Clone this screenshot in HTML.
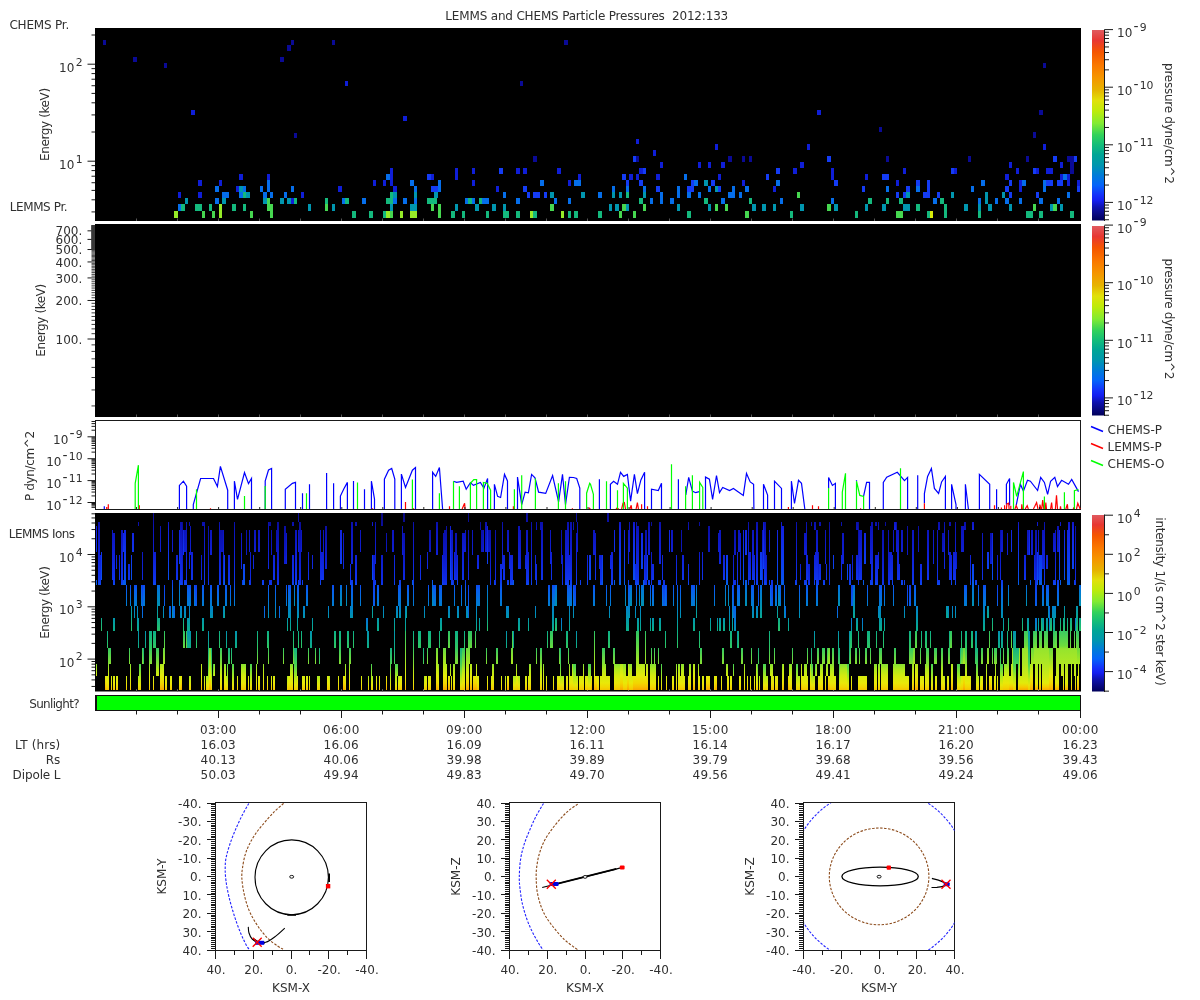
<!DOCTYPE html>
<html lang="en"><head><meta charset="utf-8"><title>LEMMS and CHEMS Particle Pressures 2012:133</title>
<style>html,body{margin:0;padding:0;background:#fff;overflow:hidden}svg{display:block;will-change:transform}text{font-family:"DejaVu Sans","Liberation Sans",sans-serif;fill:#303030}</style></head><body>
<svg width="1200" height="1000" viewBox="0 0 1200 1000">
<defs><linearGradient id="cb" x1="0" y1="1" x2="0" y2="0">
<stop offset="0.000" stop-color="#00005a"/>
<stop offset="0.030" stop-color="#08087d"/>
<stop offset="0.070" stop-color="#0e12af"/>
<stop offset="0.105" stop-color="#141ef0"/>
<stop offset="0.135" stop-color="#1432fa"/>
<stop offset="0.185" stop-color="#0564fa"/>
<stop offset="0.240" stop-color="#007dd7"/>
<stop offset="0.290" stop-color="#0096af"/>
<stop offset="0.345" stop-color="#00a596"/>
<stop offset="0.400" stop-color="#14be78"/>
<stop offset="0.450" stop-color="#32d25a"/>
<stop offset="0.510" stop-color="#82eb32"/>
<stop offset="0.575" stop-color="#beeb0a"/>
<stop offset="0.630" stop-color="#e1e10a"/>
<stop offset="0.685" stop-color="#e6b400"/>
<stop offset="0.750" stop-color="#f59600"/>
<stop offset="0.815" stop-color="#fa7800"/>
<stop offset="0.885" stop-color="#f55500"/>
<stop offset="0.945" stop-color="#e83732"/>
<stop offset="1.000" stop-color="#e05a5f"/>
</linearGradient></defs>
<rect x="0.00" y="0.00" width="1200.00" height="1000.00" fill="#fff" />
<text x="586.8" y="19.5" text-anchor="middle" font-size="12" textLength="282.9" lengthAdjust="spacing" xml:space="preserve">LEMMS and CHEMS Particle Pressures  2012:133</text>
<rect x="95.00" y="28.00" width="986.00" height="193.00" fill="#000" />
<line x1="136.50" y1="218.50" x2="136.50" y2="221.00" stroke="#555" stroke-width="1" />
<line x1="177.50" y1="218.50" x2="177.50" y2="221.00" stroke="#555" stroke-width="1" />
<line x1="218.50" y1="218.50" x2="218.50" y2="221.00" stroke="#555" stroke-width="1" />
<line x1="259.50" y1="218.50" x2="259.50" y2="221.00" stroke="#555" stroke-width="1" />
<line x1="300.50" y1="218.50" x2="300.50" y2="221.00" stroke="#555" stroke-width="1" />
<line x1="341.50" y1="218.50" x2="341.50" y2="221.00" stroke="#555" stroke-width="1" />
<line x1="382.50" y1="218.50" x2="382.50" y2="221.00" stroke="#555" stroke-width="1" />
<line x1="423.50" y1="218.50" x2="423.50" y2="221.00" stroke="#555" stroke-width="1" />
<line x1="464.50" y1="218.50" x2="464.50" y2="221.00" stroke="#555" stroke-width="1" />
<line x1="505.50" y1="218.50" x2="505.50" y2="221.00" stroke="#555" stroke-width="1" />
<line x1="546.50" y1="218.50" x2="546.50" y2="221.00" stroke="#555" stroke-width="1" />
<line x1="587.50" y1="218.50" x2="587.50" y2="221.00" stroke="#555" stroke-width="1" />
<line x1="628.50" y1="218.50" x2="628.50" y2="221.00" stroke="#555" stroke-width="1" />
<line x1="669.50" y1="218.50" x2="669.50" y2="221.00" stroke="#555" stroke-width="1" />
<line x1="710.50" y1="218.50" x2="710.50" y2="221.00" stroke="#555" stroke-width="1" />
<line x1="751.50" y1="218.50" x2="751.50" y2="221.00" stroke="#555" stroke-width="1" />
<line x1="792.50" y1="218.50" x2="792.50" y2="221.00" stroke="#555" stroke-width="1" />
<line x1="833.50" y1="218.50" x2="833.50" y2="221.00" stroke="#555" stroke-width="1" />
<line x1="874.50" y1="218.50" x2="874.50" y2="221.00" stroke="#555" stroke-width="1" />
<line x1="915.50" y1="218.50" x2="915.50" y2="221.00" stroke="#555" stroke-width="1" />
<line x1="956.50" y1="218.50" x2="956.50" y2="221.00" stroke="#555" stroke-width="1" />
<line x1="997.50" y1="218.50" x2="997.50" y2="221.00" stroke="#555" stroke-width="1" />
<line x1="1038.50" y1="218.50" x2="1038.50" y2="221.00" stroke="#555" stroke-width="1" />
<line x1="91.50" y1="211.92" x2="95.00" y2="211.92" stroke="#1a1a1a" stroke-width="1" />
<line x1="91.50" y1="199.80" x2="95.00" y2="199.80" stroke="#1a1a1a" stroke-width="1" />
<line x1="91.50" y1="190.40" x2="95.00" y2="190.40" stroke="#1a1a1a" stroke-width="1" />
<line x1="91.50" y1="182.72" x2="95.00" y2="182.72" stroke="#1a1a1a" stroke-width="1" />
<line x1="91.50" y1="176.23" x2="95.00" y2="176.23" stroke="#1a1a1a" stroke-width="1" />
<line x1="91.50" y1="170.60" x2="95.00" y2="170.60" stroke="#1a1a1a" stroke-width="1" />
<line x1="91.50" y1="165.64" x2="95.00" y2="165.64" stroke="#1a1a1a" stroke-width="1" />
<line x1="87.50" y1="161.20" x2="95.00" y2="161.20" stroke="#1a1a1a" stroke-width="1" />
<line x1="91.50" y1="132.00" x2="95.00" y2="132.00" stroke="#1a1a1a" stroke-width="1" />
<line x1="91.50" y1="114.92" x2="95.00" y2="114.92" stroke="#1a1a1a" stroke-width="1" />
<line x1="91.50" y1="102.80" x2="95.00" y2="102.80" stroke="#1a1a1a" stroke-width="1" />
<line x1="91.50" y1="93.40" x2="95.00" y2="93.40" stroke="#1a1a1a" stroke-width="1" />
<line x1="91.50" y1="85.72" x2="95.00" y2="85.72" stroke="#1a1a1a" stroke-width="1" />
<line x1="91.50" y1="79.23" x2="95.00" y2="79.23" stroke="#1a1a1a" stroke-width="1" />
<line x1="91.50" y1="73.60" x2="95.00" y2="73.60" stroke="#1a1a1a" stroke-width="1" />
<line x1="91.50" y1="68.64" x2="95.00" y2="68.64" stroke="#1a1a1a" stroke-width="1" />
<line x1="87.50" y1="64.20" x2="95.00" y2="64.20" stroke="#1a1a1a" stroke-width="1" />
<line x1="91.50" y1="35.00" x2="95.00" y2="35.00" stroke="#1a1a1a" stroke-width="1" />
<text x="82.6" y="71.6" text-anchor="end" font-size="12">10<tspan dy="-6.1" dx="1.4" font-size="10.8">2</tspan></text>
<text x="82.6" y="168.6" text-anchor="end" font-size="12">10<tspan dy="-6.1" dx="1.4" font-size="10.8">1</tspan></text>
<g shape-rendering="crispEdges">
<rect x="174.0" y="210.5" width="4.1" height="7.6" fill="#96eb28"/>
<rect x="178.1" y="204.4" width="3.1" height="6.1" fill="#056eeb"/>
<rect x="181.2" y="204.4" width="3.8" height="6.1" fill="#14b97d"/>
<rect x="178.1" y="192.3" width="3.1" height="6.1" fill="#0f1ed7"/>
<rect x="185.0" y="198.4" width="3.1" height="6.0" fill="#0096af"/>
<rect x="195.0" y="204.4" width="6.9" height="6.1" fill="#14b97d"/>
<rect x="201.9" y="210.5" width="3.1" height="7.6" fill="#46d750"/>
<rect x="198.1" y="192.3" width="3.8" height="6.1" fill="#0f1ed7"/>
<rect x="198.1" y="180.2" width="3.8" height="6.1" fill="#0f1ed7"/>
<rect x="209.1" y="204.4" width="2.8" height="6.1" fill="#14b97d"/>
<rect x="211.9" y="210.5" width="3.1" height="7.6" fill="#46d750"/>
<rect x="215.0" y="198.4" width="3.8" height="6.0" fill="#056eeb"/>
<rect x="215.0" y="186.3" width="3.8" height="6.0" fill="#056eeb"/>
<rect x="218.8" y="180.2" width="3.4" height="6.1" fill="#0f1ed7"/>
<rect x="218.8" y="210.5" width="3.4" height="7.6" fill="#96eb28"/>
<rect x="218.8" y="204.4" width="3.4" height="6.1" fill="#96eb28"/>
<rect x="222.1" y="198.4" width="3.5" height="6.0" fill="#0096af"/>
<rect x="222.1" y="192.3" width="6.6" height="6.1" fill="#056eeb"/>
<rect x="232.2" y="204.4" width="3.4" height="6.1" fill="#14b97d"/>
<rect x="236.2" y="186.3" width="2.8" height="6.0" fill="#0f1ed7"/>
<rect x="239.0" y="174.2" width="3.8" height="6.1" fill="#0f1ed7"/>
<rect x="239.0" y="186.3" width="3.8" height="6.0" fill="#0096af"/>
<rect x="239.0" y="192.3" width="3.8" height="6.1" fill="#056eeb"/>
<rect x="242.8" y="186.3" width="3.5" height="6.0" fill="#056eeb"/>
<rect x="242.8" y="192.3" width="3.5" height="6.1" fill="#14b97d"/>
<rect x="246.2" y="192.3" width="3.5" height="6.1" fill="#0096af"/>
<rect x="243.1" y="204.4" width="2.9" height="6.1" fill="#14b97d"/>
<rect x="250.0" y="210.5" width="3.1" height="7.6" fill="#46d750"/>
<rect x="260.0" y="186.3" width="3.1" height="6.0" fill="#056eeb"/>
<rect x="263.1" y="192.3" width="3.8" height="6.1" fill="#056eeb"/>
<rect x="263.1" y="198.4" width="3.8" height="6.0" fill="#0096af"/>
<rect x="266.9" y="174.2" width="3.1" height="6.1" fill="#0f1ed7"/>
<rect x="266.9" y="180.2" width="3.1" height="6.1" fill="#056eeb"/>
<rect x="266.9" y="186.3" width="3.1" height="6.0" fill="#056eeb"/>
<rect x="266.9" y="198.4" width="3.1" height="6.0" fill="#46d750"/>
<rect x="266.9" y="204.4" width="3.1" height="6.1" fill="#46d750"/>
<rect x="270.0" y="192.3" width="3.1" height="6.1" fill="#056eeb"/>
<rect x="270.0" y="204.4" width="3.1" height="6.1" fill="#46d750"/>
<rect x="270.0" y="210.5" width="3.1" height="7.6" fill="#46d750"/>
<rect x="280.0" y="198.4" width="3.8" height="6.0" fill="#0096af"/>
<rect x="283.8" y="192.3" width="3.1" height="6.1" fill="#056eeb"/>
<rect x="286.9" y="198.4" width="3.8" height="6.0" fill="#0096af"/>
<rect x="290.6" y="198.4" width="3.1" height="6.0" fill="#0f1ed7"/>
<rect x="293.8" y="198.4" width="3.1" height="6.0" fill="#14b97d"/>
<rect x="291.0" y="186.3" width="3.0" height="6.0" fill="#056eeb"/>
<rect x="301.0" y="192.3" width="3.0" height="6.1" fill="#0f1ed7"/>
<rect x="308.1" y="204.4" width="1.9" height="6.1" fill="#0096af"/>
<rect x="310.0" y="204.4" width="1.0" height="6.1" fill="#0096af"/>
<rect x="325.0" y="204.4" width="3.1" height="6.1" fill="#46d750"/>
<rect x="325.0" y="198.4" width="3.1" height="6.0" fill="#14b97d"/>
<rect x="332.2" y="204.4" width="2.8" height="6.1" fill="#0096af"/>
<rect x="338.1" y="186.3" width="3.8" height="6.0" fill="#0f1ed7"/>
<rect x="342.2" y="198.4" width="3.0" height="6.0" fill="#056eeb"/>
<rect x="345.2" y="198.4" width="3.8" height="6.0" fill="#14b97d"/>
<rect x="352.1" y="210.5" width="3.8" height="7.6" fill="#14b97d"/>
<rect x="362.2" y="198.4" width="3.6" height="6.0" fill="#056eeb"/>
<rect x="369.0" y="210.5" width="3.9" height="7.6" fill="#14b97d"/>
<rect x="373.1" y="180.2" width="2.9" height="6.1" fill="#0f1ed7"/>
<rect x="383.1" y="210.5" width="3.1" height="7.6" fill="#14b97d"/>
<rect x="386.2" y="210.5" width="3.8" height="7.6" fill="#96eb28"/>
<rect x="390.0" y="210.5" width="2.8" height="7.6" fill="#46d750"/>
<rect x="383.1" y="180.2" width="2.9" height="6.1" fill="#0f1ed7"/>
<rect x="386.2" y="174.2" width="3.8" height="6.1" fill="#056eeb"/>
<rect x="390.0" y="168.2" width="2.8" height="6.0" fill="#0f1ed7"/>
<rect x="390.0" y="174.2" width="2.8" height="6.1" fill="#0f1ed7"/>
<rect x="390.0" y="180.2" width="2.8" height="6.1" fill="#0f1ed7"/>
<rect x="386.2" y="198.4" width="3.8" height="6.0" fill="#14b97d"/>
<rect x="390.0" y="198.4" width="3.1" height="6.0" fill="#14b97d"/>
<rect x="393.1" y="198.4" width="3.8" height="6.0" fill="#056eeb"/>
<rect x="390.0" y="192.3" width="3.1" height="6.1" fill="#14b97d"/>
<rect x="393.1" y="192.3" width="3.8" height="6.1" fill="#0096af"/>
<rect x="393.1" y="186.3" width="3.8" height="6.0" fill="#0f1ed7"/>
<rect x="390.0" y="204.4" width="2.8" height="6.1" fill="#0096af"/>
<rect x="400.0" y="210.5" width="3.1" height="7.6" fill="#96eb28"/>
<rect x="403.1" y="198.4" width="3.8" height="6.0" fill="#056eeb"/>
<rect x="410.0" y="180.2" width="3.8" height="6.1" fill="#056eeb"/>
<rect x="413.8" y="186.3" width="3.1" height="6.0" fill="#056eeb"/>
<rect x="413.8" y="192.3" width="3.1" height="6.1" fill="#0096af"/>
<rect x="413.8" y="198.4" width="3.1" height="6.0" fill="#056eeb"/>
<rect x="410.0" y="204.4" width="6.9" height="6.1" fill="#0096af"/>
<rect x="410.0" y="210.5" width="6.9" height="7.6" fill="#96eb28"/>
<rect x="427.2" y="174.2" width="3.8" height="6.1" fill="#143cf5"/>
<rect x="431.0" y="174.2" width="2.8" height="6.1" fill="#0f1ed7"/>
<rect x="431.0" y="186.3" width="6.5" height="6.0" fill="#143cf5"/>
<rect x="437.5" y="180.2" width="3.1" height="6.1" fill="#056eeb"/>
<rect x="437.5" y="186.3" width="3.1" height="6.0" fill="#056eeb"/>
<rect x="434.4" y="192.3" width="3.1" height="6.1" fill="#0096af"/>
<rect x="427.2" y="198.4" width="10.2" height="6.0" fill="#14b97d"/>
<rect x="431.0" y="204.4" width="2.8" height="6.1" fill="#46d750"/>
<rect x="438.1" y="204.4" width="2.8" height="6.1" fill="#46d750"/>
<rect x="438.1" y="210.5" width="2.8" height="7.6" fill="#46d750"/>
<rect x="451.2" y="210.5" width="3.8" height="7.6" fill="#14b97d"/>
<rect x="455.0" y="204.4" width="3.1" height="6.1" fill="#0096af"/>
<rect x="455.0" y="168.2" width="3.1" height="6.0" fill="#0f1ed7"/>
<rect x="455.0" y="174.2" width="3.1" height="6.1" fill="#0f1ed7"/>
<rect x="461.9" y="210.5" width="3.1" height="7.6" fill="#14b97d"/>
<rect x="465.0" y="198.4" width="3.1" height="6.0" fill="#056eeb"/>
<rect x="468.1" y="198.4" width="3.8" height="6.0" fill="#14b97d"/>
<rect x="471.9" y="198.4" width="3.1" height="6.0" fill="#056eeb"/>
<rect x="471.9" y="180.2" width="3.1" height="6.1" fill="#0f1ed7"/>
<rect x="471.9" y="168.2" width="3.1" height="6.0" fill="#0f1ed7"/>
<rect x="475.0" y="204.4" width="3.8" height="6.1" fill="#0096af"/>
<rect x="479.0" y="198.4" width="2.9" height="6.0" fill="#14b97d"/>
<rect x="481.9" y="198.4" width="7.1" height="6.0" fill="#056eeb"/>
<rect x="486.0" y="210.5" width="3.0" height="7.6" fill="#14b97d"/>
<rect x="492.2" y="204.4" width="3.8" height="6.1" fill="#0096af"/>
<rect x="496.0" y="186.3" width="3.0" height="6.0" fill="#0f1ed7"/>
<rect x="499.0" y="168.2" width="3.9" height="6.0" fill="#143cf5"/>
<rect x="503.1" y="192.3" width="2.9" height="6.1" fill="#056eeb"/>
<rect x="503.1" y="204.4" width="2.9" height="6.1" fill="#0096af"/>
<rect x="503.1" y="210.5" width="5.9" height="7.6" fill="#14b97d"/>
<rect x="515.9" y="168.2" width="4.1" height="6.0" fill="#0f1ed7"/>
<rect x="515.9" y="198.4" width="4.1" height="6.0" fill="#056eeb"/>
<rect x="515.9" y="210.5" width="4.1" height="7.6" fill="#14b97d"/>
<rect x="523.1" y="168.2" width="3.8" height="6.0" fill="#0f1ed7"/>
<rect x="523.1" y="186.3" width="3.8" height="6.0" fill="#143cf5"/>
<rect x="526.9" y="192.3" width="3.1" height="6.1" fill="#143cf5"/>
<rect x="530.0" y="210.5" width="3.1" height="7.6" fill="#96eb28"/>
<rect x="533.1" y="210.5" width="3.8" height="7.6" fill="#14b97d"/>
<rect x="533.1" y="192.3" width="6.9" height="6.1" fill="#143cf5"/>
<rect x="533.1" y="156.1" width="3.8" height="6.0" fill="#0a0a96"/>
<rect x="540.0" y="180.2" width="4.0" height="6.1" fill="#056eeb"/>
<rect x="544.0" y="192.3" width="2.9" height="6.1" fill="#143cf5"/>
<rect x="550.0" y="192.3" width="3.8" height="6.1" fill="#0096af"/>
<rect x="553.8" y="198.4" width="3.1" height="6.0" fill="#056eeb"/>
<rect x="550.0" y="204.4" width="3.8" height="6.1" fill="#46d750"/>
<rect x="557.2" y="168.2" width="3.8" height="6.0" fill="#0f1ed7"/>
<rect x="561.0" y="210.5" width="3.0" height="7.6" fill="#96eb28"/>
<rect x="568.1" y="180.2" width="2.9" height="6.1" fill="#0f1ed7"/>
<rect x="568.1" y="198.4" width="2.9" height="6.0" fill="#056eeb"/>
<rect x="568.1" y="210.5" width="2.9" height="7.6" fill="#14b97d"/>
<rect x="574.0" y="180.2" width="7.0" height="6.1" fill="#056eeb"/>
<rect x="578.1" y="174.2" width="2.9" height="6.1" fill="#0f1ed7"/>
<rect x="574.0" y="210.5" width="3.9" height="7.6" fill="#14b97d"/>
<rect x="581.0" y="192.3" width="4.0" height="6.1" fill="#0096af"/>
<rect x="598.1" y="192.3" width="3.8" height="6.1" fill="#056eeb"/>
<rect x="598.1" y="210.5" width="3.8" height="7.6" fill="#14b97d"/>
<rect x="608.8" y="204.4" width="1.2" height="6.1" fill="#0096af"/>
<rect x="610.0" y="204.4" width="1.9" height="6.1" fill="#0096af"/>
<rect x="611.9" y="186.3" width="3.1" height="6.0" fill="#056eeb"/>
<rect x="611.9" y="192.3" width="3.1" height="6.1" fill="#0096af"/>
<rect x="615.0" y="204.4" width="4.0" height="6.1" fill="#0096af"/>
<rect x="619.0" y="192.3" width="3.1" height="6.1" fill="#0096af"/>
<rect x="619.0" y="210.5" width="3.1" height="7.6" fill="#46d750"/>
<rect x="622.1" y="174.2" width="3.5" height="6.1" fill="#143cf5"/>
<rect x="622.1" y="204.4" width="3.5" height="6.1" fill="#46d750"/>
<rect x="625.6" y="204.4" width="3.1" height="6.1" fill="#0096af"/>
<rect x="626.0" y="180.2" width="3.0" height="6.1" fill="#143cf5"/>
<rect x="626.0" y="186.3" width="3.0" height="6.0" fill="#056eeb"/>
<rect x="626.0" y="192.3" width="3.0" height="6.1" fill="#14b97d"/>
<rect x="629.0" y="174.2" width="4.1" height="6.1" fill="#0f1ed7"/>
<rect x="633.1" y="156.1" width="3.1" height="6.0" fill="#143cf5"/>
<rect x="636.2" y="156.1" width="2.8" height="6.0" fill="#0a0a96"/>
<rect x="633.1" y="210.5" width="3.1" height="7.6" fill="#46d750"/>
<rect x="636.0" y="174.2" width="3.0" height="6.1" fill="#0f1ed7"/>
<rect x="639.0" y="168.2" width="3.8" height="6.0" fill="#0f1ed7"/>
<rect x="642.8" y="168.2" width="3.2" height="6.0" fill="#143cf5"/>
<rect x="639.0" y="180.2" width="3.8" height="6.1" fill="#143cf5"/>
<rect x="639.0" y="198.4" width="3.8" height="6.0" fill="#14b97d"/>
<rect x="642.8" y="186.3" width="3.2" height="6.0" fill="#056eeb"/>
<rect x="642.8" y="192.3" width="3.2" height="6.1" fill="#0096af"/>
<rect x="642.8" y="204.4" width="3.2" height="6.1" fill="#46d750"/>
<rect x="650.0" y="198.4" width="3.1" height="6.0" fill="#056eeb"/>
<rect x="653.1" y="150.0" width="2.9" height="6.1" fill="#0f1ed7"/>
<rect x="656.0" y="174.2" width="4.0" height="6.1" fill="#0f1ed7"/>
<rect x="656.0" y="186.3" width="4.0" height="6.0" fill="#143cf5"/>
<rect x="660.0" y="162.1" width="3.1" height="6.1" fill="#0f1ed7"/>
<rect x="660.0" y="192.3" width="3.1" height="6.1" fill="#056eeb"/>
<rect x="660.0" y="198.4" width="3.1" height="6.0" fill="#056eeb"/>
<rect x="670.0" y="198.4" width="4.0" height="6.0" fill="#056eeb"/>
<rect x="677.1" y="186.3" width="2.9" height="6.0" fill="#056eeb"/>
<rect x="677.1" y="192.3" width="2.9" height="6.1" fill="#056eeb"/>
<rect x="677.1" y="204.4" width="2.9" height="6.1" fill="#0096af"/>
<rect x="684.0" y="174.2" width="3.1" height="6.1" fill="#056eeb"/>
<rect x="687.1" y="186.3" width="3.9" height="6.0" fill="#143cf5"/>
<rect x="687.1" y="192.3" width="3.9" height="6.1" fill="#056eeb"/>
<rect x="691.0" y="180.2" width="3.0" height="6.1" fill="#143cf5"/>
<rect x="691.0" y="186.3" width="3.0" height="6.0" fill="#143cf5"/>
<rect x="694.0" y="180.2" width="4.1" height="6.1" fill="#056eeb"/>
<rect x="687.1" y="210.5" width="3.9" height="7.6" fill="#14b97d"/>
<rect x="698.1" y="162.1" width="3.1" height="6.1" fill="#0f1ed7"/>
<rect x="698.1" y="192.3" width="3.1" height="6.1" fill="#056eeb"/>
<rect x="704.0" y="180.2" width="3.9" height="6.1" fill="#0096af"/>
<rect x="704.0" y="198.4" width="3.9" height="6.0" fill="#14b97d"/>
<rect x="707.9" y="162.1" width="3.1" height="6.1" fill="#0f1ed7"/>
<rect x="707.9" y="186.3" width="3.1" height="6.0" fill="#056eeb"/>
<rect x="707.9" y="204.4" width="3.1" height="6.1" fill="#0096af"/>
<rect x="711.0" y="180.2" width="4.0" height="6.1" fill="#143cf5"/>
<rect x="715.0" y="143.9" width="3.1" height="6.1" fill="#0f1ed7"/>
<rect x="715.0" y="186.3" width="3.1" height="6.0" fill="#0096af"/>
<rect x="715.0" y="204.4" width="3.1" height="6.1" fill="#46d750"/>
<rect x="718.1" y="174.2" width="2.9" height="6.1" fill="#0f1ed7"/>
<rect x="718.1" y="186.3" width="2.9" height="6.0" fill="#143cf5"/>
<rect x="721.0" y="162.1" width="4.0" height="6.1" fill="#0f1ed7"/>
<rect x="721.0" y="198.4" width="4.0" height="6.0" fill="#056eeb"/>
<rect x="725.0" y="204.4" width="3.1" height="6.1" fill="#46d750"/>
<rect x="728.1" y="156.1" width="3.8" height="6.0" fill="#0a0a96"/>
<rect x="728.1" y="192.3" width="6.9" height="6.1" fill="#056eeb"/>
<rect x="731.9" y="186.3" width="3.1" height="6.0" fill="#056eeb"/>
<rect x="739.0" y="192.3" width="3.1" height="6.1" fill="#056eeb"/>
<rect x="742.1" y="156.1" width="2.9" height="6.0" fill="#0a0a96"/>
<rect x="742.1" y="180.2" width="2.9" height="6.1" fill="#0f1ed7"/>
<rect x="745.0" y="186.3" width="4.0" height="6.0" fill="#056eeb"/>
<rect x="745.0" y="210.5" width="4.0" height="7.6" fill="#46d750"/>
<rect x="749.0" y="156.1" width="3.1" height="6.0" fill="#0a0a96"/>
<rect x="749.0" y="198.4" width="3.1" height="6.0" fill="#14b97d"/>
<rect x="752.1" y="204.4" width="3.9" height="6.1" fill="#0096af"/>
<rect x="761.9" y="204.4" width="4.0" height="6.1" fill="#0096af"/>
<rect x="765.9" y="174.2" width="3.1" height="6.1" fill="#143cf5"/>
<rect x="773.1" y="204.4" width="2.9" height="6.1" fill="#0096af"/>
<rect x="773.1" y="186.3" width="2.9" height="6.0" fill="#0f1ed7"/>
<rect x="776.0" y="168.2" width="4.0" height="6.0" fill="#143cf5"/>
<rect x="776.0" y="180.2" width="4.0" height="6.1" fill="#056eeb"/>
<rect x="780.0" y="198.4" width="3.1" height="6.0" fill="#056eeb"/>
<rect x="790.0" y="210.5" width="3.1" height="7.6" fill="#14b97d"/>
<rect x="793.1" y="168.2" width="4.0" height="6.0" fill="#0f1ed7"/>
<rect x="797.1" y="192.3" width="2.9" height="6.1" fill="#46d750"/>
<rect x="800.0" y="162.1" width="4.0" height="6.1" fill="#0f1ed7"/>
<rect x="800.0" y="204.4" width="4.0" height="6.1" fill="#0096af"/>
<rect x="806.9" y="143.9" width="3.1" height="6.1" fill="#0f1ed7"/>
<rect x="827.1" y="156.1" width="3.9" height="6.0" fill="#143cf5"/>
<rect x="827.1" y="204.4" width="3.9" height="6.1" fill="#46d750"/>
<rect x="831.0" y="168.2" width="3.0" height="6.0" fill="#0f1ed7"/>
<rect x="831.0" y="174.2" width="3.0" height="6.1" fill="#0f1ed7"/>
<rect x="831.0" y="198.4" width="3.0" height="6.0" fill="#056eeb"/>
<rect x="834.0" y="180.2" width="4.1" height="6.1" fill="#143cf5"/>
<rect x="834.0" y="204.4" width="4.1" height="6.1" fill="#0096af"/>
<rect x="855.0" y="210.5" width="3.1" height="7.6" fill="#14b97d"/>
<rect x="862.1" y="186.3" width="2.9" height="6.0" fill="#143cf5"/>
<rect x="865.0" y="174.2" width="3.1" height="6.1" fill="#0f1ed7"/>
<rect x="865.0" y="204.4" width="3.1" height="6.1" fill="#0096af"/>
<rect x="868.1" y="198.4" width="3.8" height="6.0" fill="#14b97d"/>
<rect x="882.2" y="174.2" width="6.8" height="6.1" fill="#143cf5"/>
<rect x="882.2" y="204.4" width="3.8" height="6.1" fill="#0096af"/>
<rect x="886.0" y="156.1" width="3.0" height="6.0" fill="#0a0a96"/>
<rect x="886.0" y="186.3" width="3.0" height="6.0" fill="#056eeb"/>
<rect x="886.0" y="198.4" width="3.0" height="6.0" fill="#14b97d"/>
<rect x="896.0" y="180.2" width="3.0" height="6.1" fill="#0f1ed7"/>
<rect x="896.0" y="192.3" width="3.0" height="6.1" fill="#143cf5"/>
<rect x="896.0" y="210.5" width="6.9" height="7.6" fill="#46d750"/>
<rect x="899.0" y="198.4" width="3.9" height="6.0" fill="#14b97d"/>
<rect x="902.9" y="168.2" width="3.1" height="6.0" fill="#0f1ed7"/>
<rect x="902.9" y="192.3" width="3.1" height="6.1" fill="#143cf5"/>
<rect x="906.0" y="192.3" width="4.0" height="6.1" fill="#0096af"/>
<rect x="906.0" y="186.3" width="4.0" height="6.0" fill="#143cf5"/>
<rect x="902.9" y="204.4" width="7.1" height="6.1" fill="#0096af"/>
<rect x="915.8" y="180.2" width="4.1" height="6.1" fill="#143cf5"/>
<rect x="915.8" y="186.3" width="4.1" height="6.0" fill="#056eeb"/>
<rect x="915.8" y="204.4" width="4.1" height="6.1" fill="#14b97d"/>
<rect x="923.4" y="192.3" width="6.6" height="6.1" fill="#143cf5"/>
<rect x="927.1" y="180.2" width="2.9" height="6.1" fill="#143cf5"/>
<rect x="927.1" y="186.3" width="2.9" height="6.0" fill="#143cf5"/>
<rect x="927.1" y="210.5" width="2.9" height="7.6" fill="#14b97d"/>
<rect x="930.0" y="210.5" width="3.1" height="7.6" fill="#d7eb0a"/>
<rect x="933.3" y="198.4" width="3.6" height="6.0" fill="#056eeb"/>
<rect x="937.0" y="192.3" width="3.2" height="6.1" fill="#143cf5"/>
<rect x="940.2" y="198.4" width="3.6" height="6.0" fill="#14b97d"/>
<rect x="943.8" y="204.4" width="3.4" height="6.1" fill="#14b97d"/>
<rect x="943.8" y="210.5" width="3.4" height="7.6" fill="#14b97d"/>
<rect x="951.1" y="168.2" width="2.9" height="6.0" fill="#143cf5"/>
<rect x="954.0" y="168.2" width="2.9" height="6.0" fill="#0f1ed7"/>
<rect x="951.1" y="192.3" width="2.9" height="6.1" fill="#0096af"/>
<rect x="964.2" y="204.4" width="3.8" height="6.1" fill="#0096af"/>
<rect x="968.0" y="156.1" width="2.9" height="6.0" fill="#0a0a96"/>
<rect x="971.2" y="186.3" width="2.9" height="6.0" fill="#056eeb"/>
<rect x="978.1" y="198.4" width="2.9" height="6.0" fill="#056eeb"/>
<rect x="978.1" y="204.4" width="2.9" height="6.1" fill="#0096af"/>
<rect x="978.1" y="210.5" width="2.9" height="7.6" fill="#14b97d"/>
<rect x="981.0" y="180.2" width="4.1" height="6.1" fill="#056eeb"/>
<rect x="985.1" y="192.3" width="3.2" height="6.1" fill="#0096af"/>
<rect x="985.1" y="198.4" width="3.2" height="6.0" fill="#0096af"/>
<rect x="988.3" y="204.4" width="3.6" height="6.1" fill="#0096af"/>
<rect x="995.0" y="198.4" width="2.9" height="6.0" fill="#056eeb"/>
<rect x="1002.2" y="192.3" width="2.9" height="6.1" fill="#0096af"/>
<rect x="1005.1" y="174.2" width="4.1" height="6.1" fill="#0f1ed7"/>
<rect x="1005.1" y="186.3" width="4.1" height="6.0" fill="#143cf5"/>
<rect x="1005.1" y="198.4" width="4.1" height="6.0" fill="#056eeb"/>
<rect x="1009.2" y="162.1" width="2.9" height="6.1" fill="#0f1ed7"/>
<rect x="1009.2" y="180.2" width="2.9" height="6.1" fill="#143cf5"/>
<rect x="1009.2" y="192.3" width="2.9" height="6.1" fill="#143cf5"/>
<rect x="1009.2" y="204.4" width="2.9" height="6.1" fill="#0096af"/>
<rect x="1016.0" y="168.2" width="3.1" height="6.0" fill="#0f1ed7"/>
<rect x="1019.1" y="180.2" width="2.9" height="6.1" fill="#0f1ed7"/>
<rect x="1019.1" y="186.3" width="2.9" height="6.0" fill="#0f1ed7"/>
<rect x="1019.1" y="198.4" width="2.9" height="6.0" fill="#056eeb"/>
<rect x="1022.0" y="180.2" width="3.9" height="6.1" fill="#056eeb"/>
<rect x="1025.9" y="156.1" width="3.2" height="6.0" fill="#0a0a96"/>
<rect x="1025.9" y="210.5" width="7.0" height="7.6" fill="#14b97d"/>
<rect x="1032.9" y="168.2" width="3.2" height="6.0" fill="#143cf5"/>
<rect x="1036.1" y="168.2" width="2.9" height="6.0" fill="#0f1ed7"/>
<rect x="1032.9" y="204.4" width="3.2" height="6.1" fill="#46d750"/>
<rect x="1036.1" y="192.3" width="2.9" height="6.1" fill="#143cf5"/>
<rect x="1039.1" y="198.4" width="3.9" height="6.0" fill="#056eeb"/>
<rect x="1039.1" y="210.5" width="3.9" height="7.6" fill="#14b97d"/>
<rect x="1043.0" y="143.9" width="3.1" height="6.1" fill="#0f1ed7"/>
<rect x="1043.0" y="180.2" width="3.1" height="6.1" fill="#056eeb"/>
<rect x="1043.0" y="186.3" width="3.1" height="6.0" fill="#056eeb"/>
<rect x="1046.1" y="168.2" width="6.9" height="6.0" fill="#0f1ed7"/>
<rect x="1046.1" y="180.2" width="6.9" height="6.1" fill="#143cf5"/>
<rect x="1050.3" y="204.4" width="2.6" height="6.1" fill="#0096af"/>
<rect x="1052.9" y="204.4" width="4.1" height="6.1" fill="#46d750"/>
<rect x="1052.9" y="156.1" width="4.1" height="6.0" fill="#143cf5"/>
<rect x="1057.0" y="198.4" width="3.2" height="6.0" fill="#056eeb"/>
<rect x="1057.0" y="180.2" width="6.1" height="6.1" fill="#143cf5"/>
<rect x="1060.2" y="162.1" width="2.9" height="6.1" fill="#0f1ed7"/>
<rect x="1060.2" y="174.2" width="2.9" height="6.1" fill="#0f1ed7"/>
<rect x="1060.2" y="204.4" width="2.9" height="6.1" fill="#0096af"/>
<rect x="1063.1" y="174.2" width="4.1" height="6.1" fill="#056eeb"/>
<rect x="1067.2" y="156.1" width="2.9" height="6.0" fill="#0a0a96"/>
<rect x="1070.1" y="156.1" width="3.9" height="6.0" fill="#0a0a96"/>
<rect x="1074.1" y="156.1" width="2.9" height="6.0" fill="#143cf5"/>
<rect x="1070.1" y="162.1" width="3.9" height="6.1" fill="#0a0a96"/>
<rect x="1070.1" y="168.2" width="3.9" height="6.0" fill="#0a0a96"/>
<rect x="1067.2" y="174.2" width="2.9" height="6.1" fill="#0f1ed7"/>
<rect x="1067.2" y="180.2" width="2.9" height="6.1" fill="#0f1ed7"/>
<rect x="1067.2" y="192.3" width="2.9" height="6.1" fill="#056eeb"/>
<rect x="1070.1" y="210.5" width="3.9" height="7.6" fill="#14b97d"/>
<rect x="1077.0" y="180.2" width="2.9" height="6.1" fill="#0f1ed7"/>
<rect x="1077.0" y="186.3" width="2.9" height="6.0" fill="#143cf5"/>
<rect x="102.9" y="40.0" width="3.4" height="5.2" fill="#0a0a96"/>
<rect x="133.3" y="56.7" width="3.4" height="5.2" fill="#0a0a96"/>
<rect x="163.7" y="62.9" width="3.4" height="5.2" fill="#0a0a96"/>
<rect x="191.3" y="110.0" width="3.4" height="5.2" fill="#0f1ed7"/>
<rect x="280.3" y="56.7" width="3.4" height="5.2" fill="#0a0a96"/>
<rect x="287.1" y="45.4" width="3.4" height="5.2" fill="#0a0a96"/>
<rect x="290.8" y="40.0" width="3.4" height="5.2" fill="#0a0a96"/>
<rect x="293.7" y="132.9" width="3.4" height="5.2" fill="#0a0a96"/>
<rect x="331.6" y="40.0" width="3.4" height="5.2" fill="#0a0a96"/>
<rect x="345.0" y="80.8" width="3.4" height="5.2" fill="#0f1ed7"/>
<rect x="403.3" y="115.8" width="3.4" height="5.2" fill="#0f1ed7"/>
<rect x="519.6" y="80.8" width="3.4" height="5.2" fill="#0a0a96"/>
<rect x="564.1" y="40.0" width="3.4" height="5.2" fill="#0a0a96"/>
<rect x="635.8" y="138.7" width="3.4" height="5.2" fill="#0f1ed7"/>
<rect x="817.1" y="110.0" width="3.4" height="5.2" fill="#0f1ed7"/>
<rect x="878.7" y="126.7" width="3.4" height="5.2" fill="#0a0a96"/>
<rect x="1032.5" y="132.4" width="3.4" height="5.2" fill="#0a0a96"/>
<rect x="1039.1" y="110.0" width="3.4" height="5.2" fill="#0a0a96"/>
<rect x="1042.5" y="62.9" width="3.4" height="5.2" fill="#0a0a96"/>
</g>
<text x="9.4" y="28.6" text-anchor="start" font-size="12" textLength="59.9" lengthAdjust="spacing" >CHEMS Pr.</text>
<text x="9.7" y="210.9" text-anchor="start" font-size="12" textLength="58.0" lengthAdjust="spacing" >LEMMS Pr.</text>
<text transform="translate(49.2,124.4) rotate(-90)" text-anchor="middle" font-size="12" textLength="73.0" lengthAdjust="spacing">Energy (keV)</text>
<rect x="95.00" y="224.00" width="986.00" height="193.00" fill="#000" />
<line x1="136.50" y1="414.50" x2="136.50" y2="417.00" stroke="#555" stroke-width="1" />
<line x1="177.50" y1="414.50" x2="177.50" y2="417.00" stroke="#555" stroke-width="1" />
<line x1="218.50" y1="414.50" x2="218.50" y2="417.00" stroke="#555" stroke-width="1" />
<line x1="259.50" y1="414.50" x2="259.50" y2="417.00" stroke="#555" stroke-width="1" />
<line x1="300.50" y1="414.50" x2="300.50" y2="417.00" stroke="#555" stroke-width="1" />
<line x1="341.50" y1="414.50" x2="341.50" y2="417.00" stroke="#555" stroke-width="1" />
<line x1="382.50" y1="414.50" x2="382.50" y2="417.00" stroke="#555" stroke-width="1" />
<line x1="423.50" y1="414.50" x2="423.50" y2="417.00" stroke="#555" stroke-width="1" />
<line x1="464.50" y1="414.50" x2="464.50" y2="417.00" stroke="#555" stroke-width="1" />
<line x1="505.50" y1="414.50" x2="505.50" y2="417.00" stroke="#555" stroke-width="1" />
<line x1="546.50" y1="414.50" x2="546.50" y2="417.00" stroke="#555" stroke-width="1" />
<line x1="587.50" y1="414.50" x2="587.50" y2="417.00" stroke="#555" stroke-width="1" />
<line x1="628.50" y1="414.50" x2="628.50" y2="417.00" stroke="#555" stroke-width="1" />
<line x1="669.50" y1="414.50" x2="669.50" y2="417.00" stroke="#555" stroke-width="1" />
<line x1="710.50" y1="414.50" x2="710.50" y2="417.00" stroke="#555" stroke-width="1" />
<line x1="751.50" y1="414.50" x2="751.50" y2="417.00" stroke="#555" stroke-width="1" />
<line x1="792.50" y1="414.50" x2="792.50" y2="417.00" stroke="#555" stroke-width="1" />
<line x1="833.50" y1="414.50" x2="833.50" y2="417.00" stroke="#555" stroke-width="1" />
<line x1="874.50" y1="414.50" x2="874.50" y2="417.00" stroke="#555" stroke-width="1" />
<line x1="915.50" y1="414.50" x2="915.50" y2="417.00" stroke="#555" stroke-width="1" />
<line x1="956.50" y1="414.50" x2="956.50" y2="417.00" stroke="#555" stroke-width="1" />
<line x1="997.50" y1="414.50" x2="997.50" y2="417.00" stroke="#555" stroke-width="1" />
<line x1="1038.50" y1="414.50" x2="1038.50" y2="417.00" stroke="#555" stroke-width="1" />
<line x1="91.50" y1="405.93" x2="95.00" y2="405.93" stroke="#1a1a1a" stroke-width="1" opacity="0.85"/>
<line x1="91.50" y1="389.94" x2="95.00" y2="389.94" stroke="#1a1a1a" stroke-width="1" opacity="0.85"/>
<line x1="91.50" y1="377.53" x2="95.00" y2="377.53" stroke="#1a1a1a" stroke-width="1" opacity="0.85"/>
<line x1="91.50" y1="367.40" x2="95.00" y2="367.40" stroke="#1a1a1a" stroke-width="1" opacity="0.85"/>
<line x1="91.50" y1="358.83" x2="95.00" y2="358.83" stroke="#1a1a1a" stroke-width="1" opacity="0.85"/>
<line x1="91.50" y1="351.40" x2="95.00" y2="351.40" stroke="#1a1a1a" stroke-width="1" opacity="0.85"/>
<line x1="91.50" y1="344.86" x2="95.00" y2="344.86" stroke="#1a1a1a" stroke-width="1" opacity="0.85"/>
<line x1="87.50" y1="339.00" x2="95.00" y2="339.00" stroke="#1a1a1a" stroke-width="1" />
<line x1="91.50" y1="333.70" x2="95.00" y2="333.70" stroke="#1a1a1a" stroke-width="1" opacity="0.85"/>
<line x1="91.50" y1="328.86" x2="95.00" y2="328.86" stroke="#1a1a1a" stroke-width="1" opacity="0.85"/>
<line x1="91.50" y1="324.42" x2="95.00" y2="324.42" stroke="#1a1a1a" stroke-width="1" opacity="0.85"/>
<line x1="91.50" y1="320.30" x2="95.00" y2="320.30" stroke="#1a1a1a" stroke-width="1" opacity="0.85"/>
<line x1="91.50" y1="316.46" x2="95.00" y2="316.46" stroke="#1a1a1a" stroke-width="1" opacity="0.85"/>
<line x1="91.50" y1="312.87" x2="95.00" y2="312.87" stroke="#1a1a1a" stroke-width="1" opacity="0.85"/>
<line x1="91.50" y1="309.50" x2="95.00" y2="309.50" stroke="#1a1a1a" stroke-width="1" opacity="0.85"/>
<line x1="91.50" y1="306.33" x2="95.00" y2="306.33" stroke="#1a1a1a" stroke-width="1" opacity="0.85"/>
<line x1="91.50" y1="303.32" x2="95.00" y2="303.32" stroke="#1a1a1a" stroke-width="1" opacity="0.85"/>
<line x1="87.50" y1="300.47" x2="95.00" y2="300.47" stroke="#1a1a1a" stroke-width="1" />
<line x1="91.50" y1="297.76" x2="95.00" y2="297.76" stroke="#1a1a1a" stroke-width="1" opacity="0.85"/>
<line x1="91.50" y1="295.17" x2="95.00" y2="295.17" stroke="#1a1a1a" stroke-width="1" opacity="0.85"/>
<line x1="91.50" y1="292.70" x2="95.00" y2="292.70" stroke="#1a1a1a" stroke-width="1" opacity="0.85"/>
<line x1="91.50" y1="290.33" x2="95.00" y2="290.33" stroke="#1a1a1a" stroke-width="1" opacity="0.85"/>
<line x1="91.50" y1="288.06" x2="95.00" y2="288.06" stroke="#1a1a1a" stroke-width="1" opacity="0.85"/>
<line x1="91.50" y1="285.88" x2="95.00" y2="285.88" stroke="#1a1a1a" stroke-width="1" opacity="0.85"/>
<line x1="91.50" y1="283.79" x2="95.00" y2="283.79" stroke="#1a1a1a" stroke-width="1" opacity="0.85"/>
<line x1="91.50" y1="281.76" x2="95.00" y2="281.76" stroke="#1a1a1a" stroke-width="1" opacity="0.85"/>
<line x1="91.50" y1="279.81" x2="95.00" y2="279.81" stroke="#1a1a1a" stroke-width="1" opacity="0.85"/>
<line x1="87.50" y1="277.93" x2="95.00" y2="277.93" stroke="#1a1a1a" stroke-width="1" />
<line x1="91.50" y1="276.11" x2="95.00" y2="276.11" stroke="#1a1a1a" stroke-width="1" opacity="0.85"/>
<line x1="91.50" y1="274.34" x2="95.00" y2="274.34" stroke="#1a1a1a" stroke-width="1" opacity="0.85"/>
<line x1="91.50" y1="272.63" x2="95.00" y2="272.63" stroke="#1a1a1a" stroke-width="1" opacity="0.85"/>
<line x1="91.50" y1="270.97" x2="95.00" y2="270.97" stroke="#1a1a1a" stroke-width="1" opacity="0.85"/>
<line x1="91.50" y1="269.36" x2="95.00" y2="269.36" stroke="#1a1a1a" stroke-width="1" opacity="0.85"/>
<line x1="91.50" y1="267.79" x2="95.00" y2="267.79" stroke="#1a1a1a" stroke-width="1" opacity="0.85"/>
<line x1="91.50" y1="266.27" x2="95.00" y2="266.27" stroke="#1a1a1a" stroke-width="1" opacity="0.85"/>
<line x1="91.50" y1="264.79" x2="95.00" y2="264.79" stroke="#1a1a1a" stroke-width="1" opacity="0.85"/>
<line x1="91.50" y1="263.34" x2="95.00" y2="263.34" stroke="#1a1a1a" stroke-width="1" opacity="0.85"/>
<line x1="87.50" y1="261.94" x2="95.00" y2="261.94" stroke="#1a1a1a" stroke-width="1" />
<line x1="91.50" y1="260.56" x2="95.00" y2="260.56" stroke="#1a1a1a" stroke-width="1" opacity="0.85"/>
<line x1="91.50" y1="259.22" x2="95.00" y2="259.22" stroke="#1a1a1a" stroke-width="1" opacity="0.85"/>
<line x1="91.50" y1="257.92" x2="95.00" y2="257.92" stroke="#1a1a1a" stroke-width="1" opacity="0.85"/>
<line x1="91.50" y1="256.64" x2="95.00" y2="256.64" stroke="#1a1a1a" stroke-width="1" opacity="0.85"/>
<line x1="91.50" y1="255.39" x2="95.00" y2="255.39" stroke="#1a1a1a" stroke-width="1" opacity="0.85"/>
<line x1="91.50" y1="254.17" x2="95.00" y2="254.17" stroke="#1a1a1a" stroke-width="1" opacity="0.85"/>
<line x1="91.50" y1="252.97" x2="95.00" y2="252.97" stroke="#1a1a1a" stroke-width="1" opacity="0.85"/>
<line x1="91.50" y1="251.80" x2="95.00" y2="251.80" stroke="#1a1a1a" stroke-width="1" opacity="0.85"/>
<line x1="91.50" y1="250.65" x2="95.00" y2="250.65" stroke="#1a1a1a" stroke-width="1" opacity="0.85"/>
<line x1="87.50" y1="249.53" x2="95.00" y2="249.53" stroke="#1a1a1a" stroke-width="1" />
<line x1="91.50" y1="248.43" x2="95.00" y2="248.43" stroke="#1a1a1a" stroke-width="1" opacity="0.85"/>
<line x1="91.50" y1="247.35" x2="95.00" y2="247.35" stroke="#1a1a1a" stroke-width="1" opacity="0.85"/>
<line x1="91.50" y1="246.29" x2="95.00" y2="246.29" stroke="#1a1a1a" stroke-width="1" opacity="0.85"/>
<line x1="91.50" y1="245.25" x2="95.00" y2="245.25" stroke="#1a1a1a" stroke-width="1" opacity="0.85"/>
<line x1="91.50" y1="244.23" x2="95.00" y2="244.23" stroke="#1a1a1a" stroke-width="1" opacity="0.85"/>
<line x1="91.50" y1="243.23" x2="95.00" y2="243.23" stroke="#1a1a1a" stroke-width="1" opacity="0.85"/>
<line x1="91.50" y1="242.25" x2="95.00" y2="242.25" stroke="#1a1a1a" stroke-width="1" opacity="0.85"/>
<line x1="91.50" y1="241.28" x2="95.00" y2="241.28" stroke="#1a1a1a" stroke-width="1" opacity="0.85"/>
<line x1="91.50" y1="240.33" x2="95.00" y2="240.33" stroke="#1a1a1a" stroke-width="1" opacity="0.85"/>
<line x1="87.50" y1="239.40" x2="95.00" y2="239.40" stroke="#1a1a1a" stroke-width="1" />
<line x1="91.50" y1="238.48" x2="95.00" y2="238.48" stroke="#1a1a1a" stroke-width="1" opacity="0.85"/>
<line x1="91.50" y1="237.57" x2="95.00" y2="237.57" stroke="#1a1a1a" stroke-width="1" opacity="0.85"/>
<line x1="91.50" y1="236.68" x2="95.00" y2="236.68" stroke="#1a1a1a" stroke-width="1" opacity="0.85"/>
<line x1="91.50" y1="235.81" x2="95.00" y2="235.81" stroke="#1a1a1a" stroke-width="1" opacity="0.85"/>
<line x1="91.50" y1="234.95" x2="95.00" y2="234.95" stroke="#1a1a1a" stroke-width="1" opacity="0.85"/>
<line x1="91.50" y1="234.10" x2="95.00" y2="234.10" stroke="#1a1a1a" stroke-width="1" opacity="0.85"/>
<line x1="91.50" y1="233.26" x2="95.00" y2="233.26" stroke="#1a1a1a" stroke-width="1" opacity="0.85"/>
<line x1="91.50" y1="232.44" x2="95.00" y2="232.44" stroke="#1a1a1a" stroke-width="1" opacity="0.85"/>
<line x1="91.50" y1="231.63" x2="95.00" y2="231.63" stroke="#1a1a1a" stroke-width="1" opacity="0.85"/>
<line x1="87.50" y1="230.83" x2="95.00" y2="230.83" stroke="#1a1a1a" stroke-width="1" />
<line x1="91.50" y1="230.04" x2="95.00" y2="230.04" stroke="#1a1a1a" stroke-width="1" opacity="0.85"/>
<line x1="91.50" y1="229.26" x2="95.00" y2="229.26" stroke="#1a1a1a" stroke-width="1" opacity="0.85"/>
<line x1="91.50" y1="228.49" x2="95.00" y2="228.49" stroke="#1a1a1a" stroke-width="1" opacity="0.85"/>
<line x1="91.50" y1="227.74" x2="95.00" y2="227.74" stroke="#1a1a1a" stroke-width="1" opacity="0.85"/>
<line x1="91.50" y1="226.99" x2="95.00" y2="226.99" stroke="#1a1a1a" stroke-width="1" opacity="0.85"/>
<line x1="91.50" y1="226.26" x2="95.00" y2="226.26" stroke="#1a1a1a" stroke-width="1" opacity="0.85"/>
<line x1="91.50" y1="225.53" x2="95.00" y2="225.53" stroke="#1a1a1a" stroke-width="1" opacity="0.85"/>
<rect x="91.30" y="225.20" width="3.70" height="24.80" fill="#383838" />
<text x="82.3" y="235.4" text-anchor="end" font-size="12" >700.</text>
<text x="82.3" y="244.0" text-anchor="end" font-size="12" >600.</text>
<text x="82.3" y="254.1" text-anchor="end" font-size="12" >500.</text>
<text x="82.3" y="266.5" text-anchor="end" font-size="12" >400.</text>
<text x="82.3" y="282.5" text-anchor="end" font-size="12" >300.</text>
<text x="82.3" y="305.1" text-anchor="end" font-size="12" >200.</text>
<text x="82.3" y="343.6" text-anchor="end" font-size="12" >100.</text>
<text transform="translate(45.2,320.2) rotate(-90)" text-anchor="middle" font-size="12" textLength="73.0" lengthAdjust="spacing">Energy (keV)</text>
<rect x="95.50" y="420.50" width="985.00" height="89.00" fill="#fff" stroke="#1a1a1a" stroke-width="1"/>
<line x1="91.50" y1="507.36" x2="95.00" y2="507.36" stroke="#1a1a1a" stroke-width="1" />
<line x1="91.50" y1="505.89" x2="95.00" y2="505.89" stroke="#1a1a1a" stroke-width="1" />
<line x1="91.50" y1="504.62" x2="95.00" y2="504.62" stroke="#1a1a1a" stroke-width="1" />
<line x1="91.50" y1="503.50" x2="95.00" y2="503.50" stroke="#1a1a1a" stroke-width="1" />
<line x1="87.50" y1="502.50" x2="95.00" y2="502.50" stroke="#1a1a1a" stroke-width="1" />
<line x1="91.50" y1="495.91" x2="95.00" y2="495.91" stroke="#1a1a1a" stroke-width="1" />
<line x1="91.50" y1="492.05" x2="95.00" y2="492.05" stroke="#1a1a1a" stroke-width="1" />
<line x1="91.50" y1="489.31" x2="95.00" y2="489.31" stroke="#1a1a1a" stroke-width="1" />
<line x1="91.50" y1="487.19" x2="95.00" y2="487.19" stroke="#1a1a1a" stroke-width="1" />
<line x1="91.50" y1="485.46" x2="95.00" y2="485.46" stroke="#1a1a1a" stroke-width="1" />
<line x1="91.50" y1="483.99" x2="95.00" y2="483.99" stroke="#1a1a1a" stroke-width="1" />
<line x1="91.50" y1="482.72" x2="95.00" y2="482.72" stroke="#1a1a1a" stroke-width="1" />
<line x1="91.50" y1="481.60" x2="95.00" y2="481.60" stroke="#1a1a1a" stroke-width="1" />
<line x1="87.50" y1="480.60" x2="95.00" y2="480.60" stroke="#1a1a1a" stroke-width="1" />
<line x1="91.50" y1="474.01" x2="95.00" y2="474.01" stroke="#1a1a1a" stroke-width="1" />
<line x1="91.50" y1="470.15" x2="95.00" y2="470.15" stroke="#1a1a1a" stroke-width="1" />
<line x1="91.50" y1="467.41" x2="95.00" y2="467.41" stroke="#1a1a1a" stroke-width="1" />
<line x1="91.50" y1="465.29" x2="95.00" y2="465.29" stroke="#1a1a1a" stroke-width="1" />
<line x1="91.50" y1="463.56" x2="95.00" y2="463.56" stroke="#1a1a1a" stroke-width="1" />
<line x1="91.50" y1="462.09" x2="95.00" y2="462.09" stroke="#1a1a1a" stroke-width="1" />
<line x1="91.50" y1="460.82" x2="95.00" y2="460.82" stroke="#1a1a1a" stroke-width="1" />
<line x1="91.50" y1="459.70" x2="95.00" y2="459.70" stroke="#1a1a1a" stroke-width="1" />
<line x1="87.50" y1="458.70" x2="95.00" y2="458.70" stroke="#1a1a1a" stroke-width="1" />
<line x1="91.50" y1="452.11" x2="95.00" y2="452.11" stroke="#1a1a1a" stroke-width="1" />
<line x1="91.50" y1="448.25" x2="95.00" y2="448.25" stroke="#1a1a1a" stroke-width="1" />
<line x1="91.50" y1="445.51" x2="95.00" y2="445.51" stroke="#1a1a1a" stroke-width="1" />
<line x1="91.50" y1="443.39" x2="95.00" y2="443.39" stroke="#1a1a1a" stroke-width="1" />
<line x1="91.50" y1="441.66" x2="95.00" y2="441.66" stroke="#1a1a1a" stroke-width="1" />
<line x1="91.50" y1="440.19" x2="95.00" y2="440.19" stroke="#1a1a1a" stroke-width="1" />
<line x1="91.50" y1="438.92" x2="95.00" y2="438.92" stroke="#1a1a1a" stroke-width="1" />
<line x1="91.50" y1="437.80" x2="95.00" y2="437.80" stroke="#1a1a1a" stroke-width="1" />
<line x1="87.50" y1="436.80" x2="95.00" y2="436.80" stroke="#1a1a1a" stroke-width="1" />
<line x1="91.50" y1="430.21" x2="95.00" y2="430.21" stroke="#1a1a1a" stroke-width="1" />
<line x1="91.50" y1="426.35" x2="95.00" y2="426.35" stroke="#1a1a1a" stroke-width="1" />
<line x1="91.50" y1="423.61" x2="95.00" y2="423.61" stroke="#1a1a1a" stroke-width="1" />
<line x1="91.50" y1="421.49" x2="95.00" y2="421.49" stroke="#1a1a1a" stroke-width="1" />
<text x="82.6" y="444.2" text-anchor="end" font-size="12">10<tspan dy="-6.1" dx="1.1" font-size="14">-</tspan><tspan dx="1.2" font-size="10.8">9</tspan></text>
<text x="82.6" y="466.1" text-anchor="end" font-size="12">10<tspan dy="-6.1" dx="1.1" font-size="14">-</tspan><tspan dx="1.2" font-size="10.8">10</tspan></text>
<text x="82.6" y="488.0" text-anchor="end" font-size="12">10<tspan dy="-6.1" dx="1.1" font-size="14">-</tspan><tspan dx="1.2" font-size="10.8">11</tspan></text>
<text x="82.6" y="509.9" text-anchor="end" font-size="12">10<tspan dy="-6.1" dx="1.1" font-size="14">-</tspan><tspan dx="1.2" font-size="10.8">12</tspan></text>
<text transform="translate(34.2,466) rotate(-90)" text-anchor="middle" font-size="12" textLength="70.2" lengthAdjust="spacing">P dyn/cm^2</text>
<g fill="none" stroke-width="1.2" stroke-linejoin="miter">
<path d="M104.3,506.3 L104.3,509.0 M179.4,509.0 L179.4,485.4 L183.4,481.2 L186.6,486.1 L186.6,509.0 M193.3,509.0 L193.3,504.6 L200.6,478.5 L213.5,478.5 L217.4,486.5 L220.4,466.4 L227.7,490.2 L227.7,509.0 M234.4,509.0 L234.4,481.2 L237.5,499.4 L244.5,472.6 L248.5,483.6 L251.5,478.5 L251.5,509.0 M265.2,509.0 L265.2,481.2 L268.5,470.0 L271.6,468.5 L271.6,509.0 M285.3,509.0 L285.3,489.2 L292.4,483.3 L295.5,482.4 L295.5,509.0 M302.5,509.0 L302.5,493.2 M309.5,509.0 L309.5,484.3 M326.6,509.0 L326.6,473.1 M333.6,509.0 L333.6,483.3 M340.4,509.0 L340.4,496.1 L343.9,488.8 L347.4,482.4 L347.4,509.0 M353.5,509.0 L353.5,481.0 M364.5,509.0 L364.5,489.2 M371.4,509.0 L371.4,481.2 L374.5,499.1 L374.5,509.0 M384.4,509.0 L384.4,479.2 L388.6,470.2 L391.7,468.5 L394.8,479.2 L394.8,509.0 M401.4,509.0 L401.4,474.1 L405.5,487.4 L412.4,470.2 L415.5,467.5 L415.5,509.0 M432.6,509.0 L432.6,472.3 L435.7,476.4 L439.4,467.5 L442.6,509.0 M453.5,481.2 L456.6,482.4 L463.2,481.2 L466.2,489.2 L470.4,482.6 L473.4,485.4 L480.4,482.4 L483.9,488.1 L487.6,478.5 L487.6,509.0 M494.4,509.0 L494.4,484.3 L497.6,496.4 L500.6,497.5 L504.5,474.4 L507.5,481.0 L507.5,509.0 M517.5,509.0 L517.5,477.1 L521.7,504.6 L525.1,492.2 L528.4,492.9 L531.6,474.4 L535.0,477.8 L538.6,492.2 L545.7,493.4 L552.6,475.5 L558.6,501.9 L562.5,474.4 L565.5,504.6 L569.4,477.4 L573.5,477.5 L576.7,478.5 L579.8,488.1 L579.8,509.0 M599.4,509.0 L599.4,479.2 M610.4,509.0 L610.4,484.3 L613.6,481.2 L617.5,484.3 L620.5,472.3 L623.7,476.4 L627.4,474.4 L630.6,501.2 L634.4,474.4 L637.4,493.6 L640.9,479.9 L644.6,472.3 L644.6,509.0 M651.5,509.0 L651.5,489.2 L658.3,490.5 L661.5,483.3 L661.5,509.0 M678.4,509.0 L678.4,479.2 M685.8,495.0 L688.7,477.4 L692.4,491.1 L695.6,492.7 L699.3,491.6 M705.5,509.0 L705.5,477.1 L709.4,479.2 L712.6,499.4 L716.5,475.5 L719.5,492.5 L722.7,487.4 L729.6,490.5 L733.4,488.4 L743.3,495.4 L746.5,473.4 L750.2,481.9 L753.6,484.3 L753.9,509.0 M763.5,509.0 L763.5,484.3 L767.6,495.0 L767.6,509.0 M774.5,509.0 L774.5,481.2 L781.5,488.4 L781.5,509.0 M791.4,509.0 L791.4,481.2 L794.5,503.5 L798.5,480.3 L801.5,483.3 L804.8,509.0 M828.6,488.1 L828.6,477.4 L832.4,485.4 L835.4,483.3 L835.4,509.0 M856.5,480.3 L856.5,481.2 M863.6,496.1 L866.6,482.4 L869.5,482.4 L869.5,509.0 M883.3,509.0 L883.3,482.4 L886.7,477.1 L897.3,472.3 L904.5,480.6 L907.6,477.4 L907.6,509.0 M917.7,509.0 L917.7,475.3 M924.4,503.2 L924.4,493.6 L927.6,476.4 L931.4,468.5 L934.4,488.4 L938.6,493.4 L941.6,481.9 L945.4,476.4 L945.4,509.0 M951.6,509.0 L951.6,484.3 L956.0,504.6 L956.0,509.0 M965.4,509.0 L965.4,484.3 L968.4,509.0 M979.4,509.0 L979.4,474.4 L989.7,484.3 L989.7,509.0 M996.6,509.0 L996.6,489.2 M1006.4,504.6 L1006.4,484.3 L1009.6,478.5 L1009.6,505.3 M1016.2,505.3 L1020.4,484.3 L1023.4,491.1 L1027.5,480.3 L1030.4,481.2 L1037.6,490.5 L1040.7,477.4 L1044.4,482.4 L1047.6,494.3 L1050.6,481.2 L1054.8,477.4 L1057.5,486.5 L1061.6,480.3 L1068.5,484.3 L1071.7,479.5 L1078.5,491.6" stroke="#0000ff"/>
<path d="M106.7,509.0 L106.7,507.1 M108.3,509.0 L108.3,504.2 M139.3,509.0 L139.3,505.3 M210.5,509.0 L210.5,508.2 M405.5,509.0 L405.5,502.1 M372.5,509.0 L372.5,508.3 M413.5,509.0 L413.5,508.3 M449.5,509.0 L449.5,506.3 M462.1,509.0 L464.6,503.2 L465.1,509.0 M513.4,509.0 L513.4,506.3 M572.4,509.0 L572.4,508.2 M589.3,509.0 L589.3,507.4 M616.1,509.0 L616.8,508.2 L618.9,509.0 M621.6,509.0 L623.0,503.2 L624.4,502.6 L625.5,509.0 M629.9,509.0 L631.2,505.3 L631.7,509.0 M636.1,509.0 L637.4,502.6 L638.4,509.0 M641.6,509.0 L641.6,504.2 M647.5,509.0 L647.5,506.3 M590.0,509.0 L590.0,508.3 M788.4,509.0 L788.4,507.1 M812.5,509.0 L812.5,505.3 M818.5,509.0 L818.5,506.3 M860.6,509.0 L860.6,508.2 M924.4,509.0 L924.4,503.2 M994.5,509.0 L994.5,505.3 M1001.4,509.0 L1001.4,507.4 M1004.6,509.0 L1004.6,505.3 M1006.4,509.0 L1006.9,503.9 L1008.7,503.2 L1009.1,509.0 M1010.8,509.0 L1010.8,505.7 M1014.9,509.0 L1016.2,505.7 L1017.6,509.0 M1021.5,509.0 L1021.8,504.2 L1022.4,509.0 M1025.2,509.0 L1027.2,505.7 L1028.3,509.0 M1033.4,509.0 L1034.8,506.3 L1036.6,502.6 L1038.0,509.0 M1039.6,509.0 L1039.9,504.6 L1041.0,509.0 M1041.7,509.0 L1042.7,500.1 L1043.8,509.0 M1045.4,509.0 L1045.8,502.6 L1046.5,509.0 M1050.6,509.0 L1051.6,502.6 L1052.3,509.0 M1055.4,509.0 L1056.5,495.4 L1057.5,509.0 M1060.2,509.0 L1060.5,506.3 L1060.9,509.0 M1065.8,509.0 L1067.4,504.2 L1067.8,509.0 M1073.3,509.0 L1073.7,507.4 M1076.5,509.0 L1077.8,503.2 L1079.5,507.4 L1080.2,509.0" stroke="#ff0000"/>
<path d="M135.2,509.0 L135.2,483.3 L138.4,465.2 L138.4,509.0 M196.5,509.0 L196.5,489.2 M244.5,509.0 L244.5,496.1 M265.2,509.0 L265.2,486.1 M306.5,509.0 L306.5,493.2 M357.5,509.0 L357.5,482.4 M412.4,509.0 L412.4,479.5 M439.4,509.0 L439.4,493.2 M453.5,509.0 L453.5,481.2 M459.4,509.0 L459.4,486.3 M470.4,509.0 L470.4,483.3 L473.8,479.6 L476.6,479.6 L476.6,509.0 M483.4,509.0 L483.4,482.4 L487.1,483.3 L490.6,490.2 L490.6,509.0 M514.4,509.0 L514.4,489.2 M521.7,509.0 L521.7,475.3 M535.4,509.0 L535.4,478.5 M558.4,509.0 L558.4,483.3 M565.5,509.0 L565.5,481.2 M586.6,509.0 L586.6,493.2 L589.7,483.3 L590.5,484.3 L593.4,494.3 L593.4,509.0 M606.5,509.0 L606.5,481.2 M617.5,509.0 L617.5,490.2 M623.4,509.0 L623.4,483.3 L627.4,488.1 L627.4,509.0 M671.5,509.0 L671.5,464.3 M685.6,509.0 L685.6,486.3 M692.4,509.0 L692.4,475.3 M699.6,509.0 L699.6,482.4 L702.8,487.4 L702.8,509.0 M828.6,509.0 L828.6,488.1 M842.3,509.0 L842.3,492.2 L845.5,473.3 L845.5,509.0 M856.5,509.0 L856.5,481.2 L859.8,495.4 L863.6,496.4 L863.6,509.0 M900.5,509.0 L900.5,468.2 M1013.5,509.0 L1013.5,482.4 L1016.7,496.4 L1023.4,471.6 L1023.4,509.0 M1044.4,509.0 L1044.4,496.4 M1064.4,509.0 L1064.4,492.2 M1074.4,509.0 L1074.4,490.6 L1078.5,489.5" stroke="#00ff00"/>
</g>
<line x1="136.5" y1="507" x2="136.5" y2="509.5" stroke="#222" stroke-width="1"/>
<line x1="177.6" y1="507" x2="177.6" y2="509.5" stroke="#222" stroke-width="1"/>
<line x1="218.6" y1="507" x2="218.6" y2="509.5" stroke="#222" stroke-width="1"/>
<line x1="259.7" y1="507" x2="259.7" y2="509.5" stroke="#222" stroke-width="1"/>
<line x1="300.7" y1="507" x2="300.7" y2="509.5" stroke="#222" stroke-width="1"/>
<line x1="341.8" y1="507" x2="341.8" y2="509.5" stroke="#222" stroke-width="1"/>
<line x1="382.8" y1="507" x2="382.8" y2="509.5" stroke="#222" stroke-width="1"/>
<line x1="423.8" y1="507" x2="423.8" y2="509.5" stroke="#222" stroke-width="1"/>
<line x1="464.9" y1="507" x2="464.9" y2="509.5" stroke="#222" stroke-width="1"/>
<line x1="505.9" y1="507" x2="505.9" y2="509.5" stroke="#222" stroke-width="1"/>
<line x1="547.0" y1="507" x2="547.0" y2="509.5" stroke="#222" stroke-width="1"/>
<line x1="588.0" y1="507" x2="588.0" y2="509.5" stroke="#222" stroke-width="1"/>
<line x1="629.0" y1="507" x2="629.0" y2="509.5" stroke="#222" stroke-width="1"/>
<line x1="670.1" y1="507" x2="670.1" y2="509.5" stroke="#222" stroke-width="1"/>
<line x1="711.1" y1="507" x2="711.1" y2="509.5" stroke="#222" stroke-width="1"/>
<line x1="752.2" y1="507" x2="752.2" y2="509.5" stroke="#222" stroke-width="1"/>
<line x1="793.2" y1="507" x2="793.2" y2="509.5" stroke="#222" stroke-width="1"/>
<line x1="834.2" y1="507" x2="834.2" y2="509.5" stroke="#222" stroke-width="1"/>
<line x1="875.3" y1="507" x2="875.3" y2="509.5" stroke="#222" stroke-width="1"/>
<line x1="916.3" y1="507" x2="916.3" y2="509.5" stroke="#222" stroke-width="1"/>
<line x1="957.4" y1="507" x2="957.4" y2="509.5" stroke="#222" stroke-width="1"/>
<line x1="998.4" y1="507" x2="998.4" y2="509.5" stroke="#222" stroke-width="1"/>
<line x1="1039.5" y1="507" x2="1039.5" y2="509.5" stroke="#222" stroke-width="1"/>
<rect x="95.00" y="513.00" width="986.00" height="178.50" fill="#000" />
<line x1="136.50" y1="689.00" x2="136.50" y2="691.50" stroke="#555" stroke-width="1" />
<line x1="177.50" y1="689.00" x2="177.50" y2="691.50" stroke="#555" stroke-width="1" />
<line x1="218.50" y1="689.00" x2="218.50" y2="691.50" stroke="#555" stroke-width="1" />
<line x1="259.50" y1="689.00" x2="259.50" y2="691.50" stroke="#555" stroke-width="1" />
<line x1="300.50" y1="689.00" x2="300.50" y2="691.50" stroke="#555" stroke-width="1" />
<line x1="341.50" y1="689.00" x2="341.50" y2="691.50" stroke="#555" stroke-width="1" />
<line x1="382.50" y1="689.00" x2="382.50" y2="691.50" stroke="#555" stroke-width="1" />
<line x1="423.50" y1="689.00" x2="423.50" y2="691.50" stroke="#555" stroke-width="1" />
<line x1="464.50" y1="689.00" x2="464.50" y2="691.50" stroke="#555" stroke-width="1" />
<line x1="505.50" y1="689.00" x2="505.50" y2="691.50" stroke="#555" stroke-width="1" />
<line x1="546.50" y1="689.00" x2="546.50" y2="691.50" stroke="#555" stroke-width="1" />
<line x1="587.50" y1="689.00" x2="587.50" y2="691.50" stroke="#555" stroke-width="1" />
<line x1="628.50" y1="689.00" x2="628.50" y2="691.50" stroke="#555" stroke-width="1" />
<line x1="669.50" y1="689.00" x2="669.50" y2="691.50" stroke="#555" stroke-width="1" />
<line x1="710.50" y1="689.00" x2="710.50" y2="691.50" stroke="#555" stroke-width="1" />
<line x1="751.50" y1="689.00" x2="751.50" y2="691.50" stroke="#555" stroke-width="1" />
<line x1="792.50" y1="689.00" x2="792.50" y2="691.50" stroke="#555" stroke-width="1" />
<line x1="833.50" y1="689.00" x2="833.50" y2="691.50" stroke="#555" stroke-width="1" />
<line x1="874.50" y1="689.00" x2="874.50" y2="691.50" stroke="#555" stroke-width="1" />
<line x1="915.50" y1="689.00" x2="915.50" y2="691.50" stroke="#555" stroke-width="1" />
<line x1="956.50" y1="689.00" x2="956.50" y2="691.50" stroke="#555" stroke-width="1" />
<line x1="997.50" y1="689.00" x2="997.50" y2="691.50" stroke="#555" stroke-width="1" />
<line x1="1038.50" y1="689.00" x2="1038.50" y2="691.50" stroke="#555" stroke-width="1" />
<line x1="91.50" y1="686.45" x2="95.00" y2="686.45" stroke="#1a1a1a" stroke-width="1" />
<line x1="91.50" y1="679.91" x2="95.00" y2="679.91" stroke="#1a1a1a" stroke-width="1" />
<line x1="91.50" y1="674.84" x2="95.00" y2="674.84" stroke="#1a1a1a" stroke-width="1" />
<line x1="91.50" y1="670.70" x2="95.00" y2="670.70" stroke="#1a1a1a" stroke-width="1" />
<line x1="91.50" y1="667.20" x2="95.00" y2="667.20" stroke="#1a1a1a" stroke-width="1" />
<line x1="91.50" y1="664.17" x2="95.00" y2="664.17" stroke="#1a1a1a" stroke-width="1" />
<line x1="91.50" y1="661.49" x2="95.00" y2="661.49" stroke="#1a1a1a" stroke-width="1" />
<line x1="87.50" y1="659.10" x2="95.00" y2="659.10" stroke="#1a1a1a" stroke-width="1" />
<line x1="91.50" y1="643.36" x2="95.00" y2="643.36" stroke="#1a1a1a" stroke-width="1" />
<line x1="91.50" y1="634.15" x2="95.00" y2="634.15" stroke="#1a1a1a" stroke-width="1" />
<line x1="91.50" y1="627.61" x2="95.00" y2="627.61" stroke="#1a1a1a" stroke-width="1" />
<line x1="91.50" y1="622.54" x2="95.00" y2="622.54" stroke="#1a1a1a" stroke-width="1" />
<line x1="91.50" y1="618.40" x2="95.00" y2="618.40" stroke="#1a1a1a" stroke-width="1" />
<line x1="91.50" y1="614.90" x2="95.00" y2="614.90" stroke="#1a1a1a" stroke-width="1" />
<line x1="91.50" y1="611.87" x2="95.00" y2="611.87" stroke="#1a1a1a" stroke-width="1" />
<line x1="91.50" y1="609.19" x2="95.00" y2="609.19" stroke="#1a1a1a" stroke-width="1" />
<line x1="87.50" y1="606.80" x2="95.00" y2="606.80" stroke="#1a1a1a" stroke-width="1" />
<line x1="91.50" y1="591.06" x2="95.00" y2="591.06" stroke="#1a1a1a" stroke-width="1" />
<line x1="91.50" y1="581.85" x2="95.00" y2="581.85" stroke="#1a1a1a" stroke-width="1" />
<line x1="91.50" y1="575.31" x2="95.00" y2="575.31" stroke="#1a1a1a" stroke-width="1" />
<line x1="91.50" y1="570.24" x2="95.00" y2="570.24" stroke="#1a1a1a" stroke-width="1" />
<line x1="91.50" y1="566.10" x2="95.00" y2="566.10" stroke="#1a1a1a" stroke-width="1" />
<line x1="91.50" y1="562.60" x2="95.00" y2="562.60" stroke="#1a1a1a" stroke-width="1" />
<line x1="91.50" y1="559.57" x2="95.00" y2="559.57" stroke="#1a1a1a" stroke-width="1" />
<line x1="91.50" y1="556.89" x2="95.00" y2="556.89" stroke="#1a1a1a" stroke-width="1" />
<line x1="87.50" y1="554.50" x2="95.00" y2="554.50" stroke="#1a1a1a" stroke-width="1" />
<line x1="91.50" y1="538.76" x2="95.00" y2="538.76" stroke="#1a1a1a" stroke-width="1" />
<line x1="91.50" y1="529.55" x2="95.00" y2="529.55" stroke="#1a1a1a" stroke-width="1" />
<line x1="91.50" y1="523.01" x2="95.00" y2="523.01" stroke="#1a1a1a" stroke-width="1" />
<line x1="91.50" y1="517.94" x2="95.00" y2="517.94" stroke="#1a1a1a" stroke-width="1" />
<line x1="91.50" y1="513.80" x2="95.00" y2="513.80" stroke="#1a1a1a" stroke-width="1" />
<text x="82.6" y="561.9" text-anchor="end" font-size="12">10<tspan dy="-6.1" dx="1.4" font-size="10.8">4</tspan></text>
<text x="82.6" y="614.2" text-anchor="end" font-size="12">10<tspan dy="-6.1" dx="1.4" font-size="10.8">3</tspan></text>
<text x="82.6" y="666.5" text-anchor="end" font-size="12">10<tspan dy="-6.1" dx="1.4" font-size="10.8">2</tspan></text>
<text x="8.8" y="537.6" text-anchor="start" font-size="12" textLength="66.2" lengthAdjust="spacing" >LEMMS Ions</text>
<text transform="translate(49.2,602.5) rotate(-90)" text-anchor="middle" font-size="12" textLength="72.7" lengthAdjust="spacing">Energy (keV)</text>
<defs>
<linearGradient id="g4n" gradientUnits="userSpaceOnUse" x1="0" y1="513" x2="0" y2="690">
<stop offset="0.0000" stop-color="#0a0a8c"/>
<stop offset="0.0508" stop-color="#0a0faa"/>
<stop offset="0.0960" stop-color="#0c14be"/>
<stop offset="0.2373" stop-color="#0f20d7"/>
<stop offset="0.3785" stop-color="#0f34ee"/>
<stop offset="0.4350" stop-color="#085ff0"/>
<stop offset="0.5198" stop-color="#007dd2"/>
<stop offset="0.5932" stop-color="#0096af"/>
<stop offset="0.6610" stop-color="#0aaf8c"/>
<stop offset="0.7571" stop-color="#2dc864"/>
<stop offset="0.8531" stop-color="#87e132"/>
<stop offset="0.8870" stop-color="#b4e91b"/>
<stop offset="0.9209" stop-color="#d4eb0f"/>
<stop offset="0.9605" stop-color="#eae808"/>
<stop offset="0.9831" stop-color="#f2d702"/>
<stop offset="1.0000" stop-color="#f6c300"/>
</linearGradient>
<linearGradient id="g4d" gradientUnits="userSpaceOnUse" x1="0" y1="513" x2="0" y2="690">
<stop offset="0.0000" stop-color="#080878"/>
<stop offset="0.0508" stop-color="#0a0c96"/>
<stop offset="0.0960" stop-color="#0a0faa"/>
<stop offset="0.2373" stop-color="#0c19c8"/>
<stop offset="0.3785" stop-color="#0f2ae6"/>
<stop offset="0.4350" stop-color="#0c46f0"/>
<stop offset="0.5198" stop-color="#085feb"/>
<stop offset="0.5932" stop-color="#0573dc"/>
<stop offset="0.6610" stop-color="#0091b4"/>
<stop offset="0.7571" stop-color="#0faf87"/>
<stop offset="0.8531" stop-color="#46d255"/>
<stop offset="0.8983" stop-color="#82e432"/>
<stop offset="0.9379" stop-color="#beeb14"/>
<stop offset="0.9718" stop-color="#e6e60a"/>
<stop offset="1.0000" stop-color="#f0cd00"/>
</linearGradient>
<linearGradient id="g4b" gradientUnits="userSpaceOnUse" x1="0" y1="513" x2="0" y2="690">
<stop offset="0.0000" stop-color="#0c0fa5"/>
<stop offset="0.0508" stop-color="#0f16c8"/>
<stop offset="0.0960" stop-color="#1223e1"/>
<stop offset="0.2373" stop-color="#0f37f0"/>
<stop offset="0.3785" stop-color="#0850f0"/>
<stop offset="0.4350" stop-color="#0078d7"/>
<stop offset="0.5198" stop-color="#0091b4"/>
<stop offset="0.5932" stop-color="#0aaa91"/>
<stop offset="0.6610" stop-color="#28c369"/>
<stop offset="0.7571" stop-color="#64da41"/>
<stop offset="0.8531" stop-color="#afe81e"/>
<stop offset="0.8870" stop-color="#cdeb12"/>
<stop offset="0.9209" stop-color="#e4eb0a"/>
<stop offset="0.9605" stop-color="#f2d700"/>
<stop offset="0.9831" stop-color="#f8be00"/>
<stop offset="1.0000" stop-color="#faa500"/>
</linearGradient>
<linearGradient id="g4B" gradientUnits="userSpaceOnUse" x1="0" y1="513" x2="0" y2="690">
<stop offset="0.0000" stop-color="#0c0fa5"/>
<stop offset="0.0508" stop-color="#0f16c8"/>
<stop offset="0.0960" stop-color="#1223e1"/>
<stop offset="0.2373" stop-color="#0f37f0"/>
<stop offset="0.3785" stop-color="#0850f0"/>
<stop offset="0.4350" stop-color="#0078d7"/>
<stop offset="0.5198" stop-color="#0096af"/>
<stop offset="0.5932" stop-color="#0faf8c"/>
<stop offset="0.6610" stop-color="#37c864"/>
<stop offset="0.7514" stop-color="#6edc3c"/>
<stop offset="0.7684" stop-color="#96e42d"/>
<stop offset="0.8531" stop-color="#afe823"/>
<stop offset="0.9209" stop-color="#cdeb14"/>
<stop offset="0.9605" stop-color="#e2eb0a"/>
<stop offset="0.9831" stop-color="#f5cd00"/>
<stop offset="1.0000" stop-color="#faaa00"/>
</linearGradient>
</defs>
<path d="M298,513h1V522h-1zM526,513h2V522h-2zM576,513h1V522h-1zM607,513h2V522h-2zM153,513h1V585h-1zM138,522h1V526h-1zM189,522h1V526h-1zM202,522h2V526h-2zM292,522h2V526h-2zM355,522h2V526h-2zM811,522h1V526h-1zM819,522h2V526h-2zM841,522h1V526h-1zM875,522h2V526h-2zM949,522h2V526h-2zM536,522h1V530h-1zM540,522h1V530h-1zM573,522h1V530h-1zM688,522h1V530h-1zM814,522h2V530h-2zM856,522h2V530h-2zM878,522h1V530h-1zM938,522h2V530h-2zM964,522h2V530h-2zM485,522h2V552h-2zM577,522h1V552h-1zM629,522h1V552h-1zM896,522h1V552h-1zM436,522h2V555h-2zM648,522h2V555h-2zM351,522h2V564h-2zM375,522h1V564h-1zM659,522h2V564h-2zM268,522h1V568.5h-1zM502,522h1V568.5h-1zM944,522h1V568.5h-1zM541,522h2V580h-2zM98,522h2V584.8h-2zM570,522h2V584.8h-2zM636,522h1V584.8h-1zM180,522h2V585h-2zM186,522h1V585h-1zM204,522h1V585h-1zM219,522h1V585h-1zM531,522h1V585h-1zM748,522h1V585h-1zM756,522h2V585h-2zM764,522h2V585h-2zM796,522h1V585h-1zM871,522h2V585h-2zM955,522h1V585h-1zM1044,522h1V585h-1zM234,522h1V605.5h-1zM413,522h1V605.5h-1zM567,522h2V605.5h-2zM806,522h1V605.5h-1zM160,526h1V552h-1zM961,526h3V552h-3zM1057,526h2V552h-2zM190,526h1V555h-1zM402,526h1V555h-1zM870,526h1V564h-1zM518,526h2V568.5h-2zM637,526h2V585h-2zM172,530h1V552h-1zM184,530h2V552h-2zM249,530h1V552h-1zM254,530h2V552h-2zM258,530h2V552h-2zM298,530h1V552h-1zM301,530h1V552h-1zM360,530h1V552h-1zM392,530h2V552h-2zM465,530h1V552h-1zM483,530h1V552h-1zM507,530h2V552h-2zM671,530h2V552h-2zM738,530h2V552h-2zM769,530h1V552h-1zM893,530h1V552h-1zM901,530h2V552h-2zM1001,530h2V552h-2zM210,530h2V555h-2zM472,530h1V555h-1zM593,530h2V555h-2zM948,530h1V555h-1zM1027,530h2V555h-2zM1031,530h2V555h-2zM550,530h1V564h-1zM628,530h1V564h-1zM719,530h2V564h-2zM825,530h1V564h-1zM933,530h1V564h-1zM520,530h1V568.5h-1zM1042,530h2V568.5h-2zM112,530h1V580h-1zM323,530h1V580h-1zM752,530h2V580h-2zM859,530h3V580h-3zM897,530h2V580h-2zM927,530h2V580h-2zM1038,530h1V580h-1zM451,530h2V584.8h-2zM565,530h1V584.8h-1zM1055,530h1V584.8h-1zM121,530h2V585h-2zM223,530h1V585h-1zM295,530h2V585h-2zM320,530h1V585h-1zM526,530h2V585h-2zM566,530h1V585h-1zM762,530h1V585h-1zM912,530h2V585h-2zM937,530h1V585h-1zM816,530h2V605.5h-2zM464,533h1V552h-1zM718,533h1V552h-1zM1053,533h2V552h-2zM804,533h2V555h-2zM1007,533h1V555h-1zM286,533h1V564h-1zM842,533h2V564h-2zM241,533h1V568.5h-1zM343,533h1V568.5h-1zM462,533h2V580h-2zM595,533h1V580h-1zM740,533h1V580h-1zM982,533h1V580h-1zM113,533h2V585h-2zM576,533h1V585h-1zM189,552h1V568.5h-1zM427,552h1V568.5h-1zM509,552h1V568.5h-1zM878,552h1V568.5h-1zM191,552h2V580h-2zM308,552h1V580h-1zM321,552h2V580h-2zM454,552h1V580h-1zM551,552h1V580h-1zM702,552h1V580h-1zM749,552h2V580h-2zM815,552h1V580h-1zM890,552h2V580h-2zM949,552h2V580h-2zM953,552h2V580h-2zM528,552h1V584.8h-1zM611,552h2V584.8h-2zM737,552h1V584.8h-1zM154,552h2V585h-2zM116,555h1V568.5h-1zM253,555h1V568.5h-1zM312,555h1V568.5h-1zM477,555h2V568.5h-2zM525,555h1V568.5h-1zM599,555h1V568.5h-1zM610,555h1V568.5h-1zM1046,555h2V568.5h-2zM119,555h1V580h-1zM176,555h2V580h-2zM273,555h2V580h-2zM420,555h1V580h-1zM503,555h2V580h-2zM535,555h1V580h-1zM569,555h1V580h-1zM662,555h1V580h-1zM682,555h2V580h-2zM723,555h2V580h-2zM807,555h1V580h-1zM841,555h1V580h-1zM856,555h2V580h-2zM1024,555h2V580h-2zM1034,555h1V580h-1zM100,555h1V584.8h-1zM457,555h1V584.8h-1zM587,555h1V584.8h-1zM676,555h1V584.8h-1zM754,555h1V584.8h-1zM877,555h1V584.8h-1zM228,555h2V585h-2zM292,555h2V585h-2zM355,555h2V585h-2zM394,555h1V585h-1zM442,555h1V585h-1zM510,555h3V585h-3zM600,555h2V585h-2zM644,555h1V585h-1zM814,555h1V585h-1zM875,555h2V585h-2zM892,555h1V585h-1zM951,555h1V585h-1zM970,555h1V585h-1zM128,564h2V580h-2zM652,564h2V580h-2zM819,564h2V580h-2zM826,564h1V580h-1zM899,564h1V580h-1zM350,564h1V584.8h-1zM500,564h2V584.8h-2zM635,564h1V584.8h-1zM536,564h1V585h-1zM688,564h1V585h-1zM849,564h2V585h-2zM920,564h2V585h-2zM184,580h2V585h-2zM242,580h1V585h-1zM249,580h1V585h-1zM262,580h2V585h-2zM302,580h1V585h-1zM375,580h1V585h-1zM494,580h1V585h-1zM507,580h2V585h-2zM580,580h1V585h-1zM648,580h2V585h-2zM658,580h3V585h-3zM769,580h1V585h-1zM795,580h1V585h-1zM804,580h2V585h-2zM823,580h2V585h-2zM870,580h1V585h-1zM901,580h2V585h-2zM904,580h1V585h-1zM938,580h2V585h-2zM975,580h2V585h-2zM1053,580h2V585h-2zM1074,580h1V585h-1zM465,580h1V605.5h-1zM1057,580h2V605.5h-2zM172,580h1V618h-1zM298,580h1V618h-1zM351,580h2V618h-2zM399,580h2V618h-2zM1001,580h2V618h-2zM628,580h1V630.5h-1zM126,585h1V605.5h-1zM130,585h1V605.5h-1zM135,585h2V605.5h-2zM141,585h1V605.5h-1zM143,585h2V605.5h-2zM187,585h2V605.5h-2zM190,585h1V605.5h-1zM194,585h1V605.5h-1zM202,585h2V605.5h-2zM217,585h2V605.5h-2zM225,585h2V605.5h-2zM230,585h1V605.5h-1zM286,585h1V605.5h-1zM306,585h2V605.5h-2zM332,585h2V605.5h-2zM360,585h1V605.5h-1zM377,585h2V605.5h-2zM398,585h1V605.5h-1zM407,585h2V605.5h-2zM428,585h1V605.5h-1zM433,585h3V605.5h-3zM439,585h3V605.5h-3zM454,585h1V605.5h-1zM461,585h1V605.5h-1zM477,585h3V605.5h-3zM500,585h2V605.5h-2zM548,585h2V605.5h-2zM554,585h1V605.5h-1zM570,585h2V605.5h-2zM593,585h2V605.5h-2zM606,585h1V605.5h-1zM610,585h1V605.5h-1zM636,585h1V605.5h-1zM650,585h1V605.5h-1zM652,585h2V605.5h-2zM662,585h1V605.5h-1zM665,585h1V605.5h-1zM673,585h1V605.5h-1zM691,585h4V605.5h-4zM714,585h1V605.5h-1zM737,585h3V605.5h-3zM751,585h1V605.5h-1zM770,585h1V605.5h-1zM775,585h2V605.5h-2zM780,585h1V605.5h-1zM807,585h1V605.5h-1zM867,585h1V605.5h-1zM881,585h1V605.5h-1zM884,585h1V605.5h-1zM893,585h1V605.5h-1zM914,585h2V605.5h-2zM964,585h3V605.5h-3zM978,585h1V605.5h-1zM985,585h1V605.5h-1zM1042,585h2V605.5h-2zM1046,585h2V605.5h-2zM134,585h1V618h-1zM210,585h2V618h-2zM268,585h1V618h-1zM275,585h1V618h-1zM288,585h2V618h-2zM573,585h1V618h-1zM629,585h1V618h-1zM680,585h1V618h-1zM752,585h2V618h-2zM784,585h1V618h-1zM799,585h1V618h-1zM1048,585h1V618h-1zM189,585h1V630.5h-1zM290,585h1V630.5h-1zM297,585h1V630.5h-1zM476,585h1V630.5h-1zM552,585h2V630.5h-2zM569,585h1V630.5h-1zM677,585h1V630.5h-1zM732,585h1V630.5h-1zM879,585h2V630.5h-2zM983,585h2V630.5h-2zM163,605.5h1V618h-1zM180,605.5h2V618h-2zM184,605.5h2V618h-2zM212,605.5h1V618h-1zM223,605.5h1V618h-1zM303,605.5h2V618h-2zM328,605.5h1V618h-1zM350,605.5h1V618h-1zM383,605.5h1V618h-1zM396,605.5h2V618h-2zM424,605.5h1V618h-1zM448,605.5h2V618h-2zM457,605.5h2V618h-2zM466,605.5h2V618h-2zM506,605.5h3V618h-3zM535,605.5h1V618h-1zM609,605.5h1V618h-1zM635,605.5h1V618h-1zM756,605.5h2V618h-2zM878,605.5h1V618h-1zM904,605.5h1V618h-1zM948,605.5h1V618h-1zM952,605.5h1V618h-1zM955,605.5h1V618h-1zM1052,605.5h1V618h-1zM1055,605.5h1V618h-1zM137,605.5h1V630.5h-1zM405,605.5h1V630.5h-1zM626,605.5h2V630.5h-2zM640,605.5h1V630.5h-1zM729,605.5h1V630.5h-1zM916,605.5h2V630.5h-2zM1053,605.5h2V630.5h-2zM113,618h2V630.5h-2zM138,618h1V630.5h-1zM187,618h2V630.5h-2zM202,618h2V630.5h-2zM287,618h1V630.5h-1zM312,618h1V630.5h-1zM377,618h2V630.5h-2zM394,618h1V630.5h-1zM440,618h2V630.5h-2zM479,618h1V630.5h-1zM518,618h2V630.5h-2zM528,618h1V630.5h-1zM637,618h2V630.5h-2zM650,618h1V630.5h-1zM652,618h2V630.5h-2zM659,618h2V630.5h-2zM693,618h2V630.5h-2zM710,618h1V630.5h-1zM717,618h1V630.5h-1zM719,618h2V630.5h-2zM723,618h2V630.5h-2zM788,618h1V630.5h-1zM856,618h2V630.5h-2zM881,618h1V630.5h-1zM884,618h1V630.5h-1zM1003,618h1V630.5h-1zM1027,618h2V630.5h-2zM1038,618h1V630.5h-1zM1042,618h2V630.5h-2zM1046,618h2V630.5h-2zM107,630.5h1V647.8h-1zM149,630.5h3V647.8h-3zM153,630.5h3V647.8h-3zM196,630.5h1V647.8h-1zM219,630.5h1V647.8h-1zM257,630.5h1V647.8h-1zM267,630.5h2V647.8h-2zM293,630.5h1V647.8h-1zM298,630.5h1V647.8h-1zM301,630.5h1V647.8h-1zM334,630.5h2V647.8h-2zM339,630.5h2V647.8h-2zM347,630.5h2V647.8h-2zM353,630.5h1V647.8h-1zM413,630.5h1V647.8h-1zM418,630.5h3V647.8h-3zM428,630.5h3V647.8h-3zM439,630.5h1V647.8h-1zM455,630.5h3V647.8h-3zM464,630.5h1V647.8h-1zM547,630.5h1V647.8h-1zM566,630.5h2V647.8h-2zM608,630.5h2V647.8h-2zM665,630.5h1V647.8h-1zM677,630.5h1V647.8h-1zM699,630.5h1V647.8h-1zM730,630.5h2V647.8h-2zM738,630.5h1V647.8h-1zM769,630.5h1V647.8h-1zM850,630.5h2V647.8h-2zM858,630.5h1V647.8h-1zM867,630.5h3V647.8h-3zM876,630.5h1V647.8h-1zM883,630.5h1V647.8h-1zM909,630.5h2V647.8h-2zM921,630.5h1V647.8h-1zM925,630.5h2V647.8h-2zM930,630.5h1V647.8h-1zM949,630.5h1V647.8h-1zM961,630.5h1V647.8h-1zM965,630.5h2V647.8h-2zM971,630.5h2V647.8h-2zM1007,630.5h1V647.8h-1zM108,647.8h3V664h-3zM129,647.8h1V664h-1zM142,647.8h1V664h-1zM149,647.8h3V664h-3zM156,647.8h3V664h-3zM220,647.8h2V664h-2zM257,647.8h1V664h-1zM268,647.8h1V664h-1zM283,647.8h1V664h-1zM293,647.8h1V664h-1zM308,647.8h1V664h-1zM315,647.8h1V664h-1zM339,647.8h2V664h-2zM349,647.8h2V664h-2zM413,647.8h1V664h-1zM427,647.8h1V664h-1zM455,647.8h3V664h-3zM462,647.8h3V664h-3zM486,647.8h1V664h-1zM496,647.8h2V664h-2zM536,647.8h1V664h-1zM540,647.8h2V664h-2zM559,647.8h1V664h-1zM568,647.8h1V664h-1zM602,647.8h3V664h-3zM613,647.8h2V664h-2zM651,647.8h1V664h-1zM654,647.8h1V664h-1zM658,647.8h1V664h-1zM700,647.8h2V664h-2zM722,647.8h2V664h-2zM741,647.8h2V664h-2zM751,647.8h1V664h-1zM769,647.8h1V664h-1zM774,647.8h1V664h-1zM792,647.8h1V664h-1zM807,647.8h1V664h-1zM817,647.8h2V664h-2zM822,647.8h3V664h-3zM827,647.8h1V664h-1zM832,647.8h2V664h-2zM850,647.8h1V664h-1zM855,647.8h2V664h-2zM859,647.8h1V664h-1zM865,647.8h2V664h-2zM870,647.8h1V664h-1zM879,647.8h3V664h-3zM894,647.8h2V664h-2zM909,647.8h4V664h-4zM920,647.8h1V664h-1zM926,647.8h3V664h-3zM934,647.8h3V664h-3zM941,647.8h2V664h-2zM948,647.8h2V664h-2zM961,647.8h2V664h-2zM965,647.8h2V664h-2zM981,647.8h2V664h-2zM992,647.8h1V664h-1zM994,647.8h3V664h-3zM1003,647.8h1V664h-1zM1007,647.8h2V664h-2zM96,664h1V676.3h-1zM108,664h1V676.3h-1zM130,664h1V676.3h-1zM149,664h1V676.3h-1zM156,664h3V676.3h-3zM214,664h1V676.3h-1zM220,664h2V676.3h-2zM224,664h2V676.3h-2zM241,664h5V676.3h-5zM256,664h1V676.3h-1zM263,664h1V676.3h-1zM290,664h3V676.3h-3zM345,664h1V676.3h-1zM349,664h1V676.3h-1zM413,664h1V676.3h-1zM438,664h1V676.3h-1zM450,664h1V676.3h-1zM453,664h2V676.3h-2zM462,664h3V676.3h-3zM492,664h2V676.3h-2zM516,664h1V676.3h-1zM529,664h2V676.3h-2zM540,664h2V676.3h-2zM543,664h1V676.3h-1zM569,664h1V676.3h-1zM572,664h1V676.3h-1zM583,664h1V676.3h-1zM602,664h4V676.3h-4zM614,664h6V676.3h-6zM623,664h3V676.3h-3zM629,664h3V676.3h-3zM650,664h6V676.3h-6zM676,664h1V676.3h-1zM678,664h2V676.3h-2zM681,664h3V676.3h-3zM689,664h2V676.3h-2zM698,664h1V676.3h-1zM726,664h2V676.3h-2zM744,664h1V676.3h-1zM756,664h1V676.3h-1zM770,664h3V676.3h-3zM782,664h1V676.3h-1zM789,664h3V676.3h-3zM804,664h3V676.3h-3zM810,664h1V676.3h-1zM816,664h1V676.3h-1zM820,664h3V676.3h-3zM826,664h2V676.3h-2zM830,664h4V676.3h-4zM840,664h7V676.3h-7zM874,664h3V676.3h-3zM878,664h2V676.3h-2zM881,664h7V676.3h-7zM893,664h12V676.3h-12zM912,664h1V676.3h-1zM925,664h4V676.3h-4zM941,664h2V676.3h-2zM965,664h2V676.3h-2zM986,664h1V676.3h-1zM995,664h1V676.3h-1zM1004,664h5V676.3h-5zM106,676.3h3V690.2h-3zM111,676.3h1V690.2h-1zM113,676.3h2V690.2h-2zM116,676.3h2V690.2h-2zM126,676.3h1V690.2h-1zM130,676.3h1V690.2h-1zM149,676.3h1V690.2h-1zM153,676.3h1V690.2h-1zM165,676.3h2V690.2h-2zM170,676.3h2V690.2h-2zM179,676.3h2V690.2h-2zM220,676.3h2V690.2h-2zM224,676.3h2V690.2h-2zM237,676.3h1V690.2h-1zM241,676.3h5V690.2h-5zM248,676.3h1V690.2h-1zM256,676.3h1V690.2h-1zM258,676.3h2V690.2h-2zM263,676.3h1V690.2h-1zM267,676.3h1V690.2h-1zM271,676.3h1V690.2h-1zM273,676.3h2V690.2h-2zM288,676.3h5V690.2h-5zM297,676.3h1V690.2h-1zM302,676.3h3V690.2h-3zM306,676.3h2V690.2h-2zM309,676.3h1V690.2h-1zM327,676.3h2V690.2h-2zM338,676.3h1V690.2h-1zM345,676.3h1V690.2h-1zM349,676.3h1V690.2h-1zM361,676.3h1V690.2h-1zM376,676.3h1V690.2h-1zM379,676.3h1V690.2h-1zM399,676.3h3V690.2h-3zM413,676.3h1V690.2h-1zM425,676.3h2V690.2h-2zM428,676.3h3V690.2h-3zM438,676.3h1V690.2h-1zM451,676.3h1V690.2h-1zM453,676.3h2V690.2h-2zM462,676.3h3V690.2h-3zM477,676.3h2V690.2h-2zM487,676.3h1V690.2h-1zM491,676.3h3V690.2h-3zM501,676.3h1V690.2h-1zM516,676.3h2V690.2h-2zM525,676.3h2V690.2h-2zM528,676.3h3V690.2h-3zM540,676.3h2V690.2h-2zM543,676.3h1V690.2h-1zM546,676.3h1V690.2h-1zM553,676.3h1V690.2h-1zM557,676.3h3V690.2h-3zM566,676.3h2V690.2h-2zM569,676.3h4V690.2h-4zM579,676.3h5V690.2h-5zM585,676.3h3V690.2h-3zM597,676.3h2V690.2h-2zM600,676.3h10V690.2h-10zM614,676.3h6V690.2h-6zM623,676.3h4V690.2h-4zM629,676.3h4V690.2h-4zM650,676.3h6V690.2h-6zM658,676.3h1V690.2h-1zM666,676.3h1V690.2h-1zM672,676.3h2V690.2h-2zM676,676.3h1V690.2h-1zM678,676.3h7V690.2h-7zM688,676.3h3V690.2h-3zM698,676.3h2V690.2h-2zM702,676.3h2V690.2h-2zM714,676.3h1V690.2h-1zM721,676.3h1V690.2h-1zM727,676.3h2V690.2h-2zM730,676.3h2V690.2h-2zM739,676.3h2V690.2h-2zM744,676.3h1V690.2h-1zM747,676.3h1V690.2h-1zM750,676.3h1V690.2h-1zM754,676.3h1V690.2h-1zM756,676.3h1V690.2h-1zM771,676.3h3V690.2h-3zM775,676.3h3V690.2h-3zM782,676.3h1V690.2h-1zM789,676.3h3V690.2h-3zM802,676.3h6V690.2h-6zM810,676.3h1V690.2h-1zM818,676.3h5V690.2h-5zM825,676.3h1V690.2h-1zM830,676.3h6V690.2h-6zM840,676.3h7V690.2h-7zM851,676.3h1V690.2h-1zM858,676.3h9V690.2h-9zM874,676.3h3V690.2h-3zM878,676.3h2V690.2h-2zM881,676.3h7V690.2h-7zM893,676.3h16V690.2h-16zM912,676.3h1V690.2h-1zM920,676.3h4V690.2h-4zM925,676.3h4V690.2h-4zM935,676.3h2V690.2h-2zM941,676.3h3V690.2h-3zM947,676.3h2V690.2h-2zM961,676.3h2V690.2h-2zM965,676.3h6V690.2h-6zM981,676.3h2V690.2h-2zM986,676.3h1V690.2h-1zM991,676.3h1V690.2h-1zM994,676.3h2V690.2h-2zM997,676.3h1V690.2h-1zM1003,676.3h6V690.2h-6z" fill="url(#g4n)" shape-rendering="crispEdges"/>
<path d="M403,513h2V522h-2zM468,513h1V522h-1zM381,513h2V526h-2zM269,522h2V526h-2zM651,522h1V526h-1zM699,522h1V526h-1zM885,522h1V526h-1zM480,522h1V530h-1zM829,522h1V584.8h-1zM182,522h1V585h-1zM277,522h2V585h-2zM299,522h2V585h-2zM858,522h1V585h-1zM708,526h2V552h-2zM918,526h1V552h-1zM907,526h1V555h-1zM284,526h2V564h-2zM325,526h2V568.5h-2zM208,526h1V585h-1zM446,526h1V585h-1zM1075,526h1V585h-1zM221,530h2V552h-2zM276,530h1V552h-1zM429,530h2V552h-2zM481,530h2V552h-2zM488,530h2V552h-2zM681,530h1V552h-1zM246,530h1V555h-1zM271,530h1V555h-1zM734,530h2V555h-2zM561,530h1V564h-1zM468,530h1V580h-1zM1000,530h1V580h-1zM645,530h2V584.8h-2zM888,530h1V584.8h-1zM220,530h1V585h-1zM444,530h2V585h-2zM490,530h1V585h-1zM495,530h1V585h-1zM882,530h2V585h-2zM1035,530h2V605.5h-2zM386,533h1V552h-1zM942,533h2V552h-2zM990,533h2V564h-2zM403,533h2V580h-2zM455,533h2V580h-2zM443,533h1V585h-1zM956,552h1V568.5h-1zM142,552h1V580h-1zM699,552h1V584.8h-1zM889,552h1V584.8h-1zM250,552h1V585h-1zM651,552h1V585h-1zM818,552h1V585h-1zM201,555h1V580h-1zM852,555h1V580h-1zM997,555h1V580h-1zM562,555h1V584.8h-1zM733,555h1V584.8h-1zM766,555h1V584.8h-1zM381,555h2V585h-2zM373,555h2V605.5h-2zM800,564h1V580h-1zM808,564h2V584.8h-2zM269,580h3V585h-3zM453,580h1V585h-1zM734,580h2V585h-2zM663,580h2V605.5h-2zM771,580h2V605.5h-2zM164,585h1V605.5h-1zM195,585h2V605.5h-2zM574,585h2V605.5h-2zM666,585h1V605.5h-1zM758,585h1V605.5h-1zM851,585h2V605.5h-2zM907,585h1V605.5h-1zM909,585h2V605.5h-2zM997,585h1V605.5h-1zM142,585h1V618h-1zM468,585h1V618h-1zM733,585h1V618h-1zM169,605.5h2V618h-2zM173,605.5h2V618h-2zM264,605.5h1V618h-1zM279,605.5h1V618h-1zM785,605.5h1V618h-1zM837,605.5h1V618h-1zM734,605.5h2V630.5h-2zM1049,605.5h1V630.5h-1zM366,618h2V630.5h-2zM561,618h1V630.5h-1zM851,618h1V630.5h-1zM862,618h1V630.5h-1zM1035,618h2V630.5h-2zM1075,618h1V630.5h-1zM138,630.5h1V647.8h-1zM145,630.5h1V647.8h-1zM187,630.5h4V647.8h-4zM208,630.5h1V647.8h-1zM226,630.5h1V647.8h-1zM235,630.5h2V647.8h-2zM310,630.5h2V647.8h-2zM367,630.5h2V647.8h-2zM394,630.5h1V647.8h-1zM506,630.5h1V647.8h-1zM513,630.5h1V647.8h-1zM576,630.5h1V647.8h-1zM737,630.5h1V647.8h-1zM814,630.5h1V647.8h-1zM838,630.5h1V647.8h-1zM849,630.5h1V647.8h-1zM975,630.5h2V647.8h-2zM998,630.5h2V647.8h-2zM1001,630.5h2V647.8h-2zM1013,630.5h3V647.8h-3zM1028,630.5h2V647.8h-2zM143,647.8h1V664h-1zM208,647.8h1V664h-1zM211,647.8h1V664h-1zM228,647.8h2V664h-2zM231,647.8h1V664h-1zM294,647.8h3V664h-3zM319,647.8h1V664h-1zM390,647.8h2V664h-2zM394,647.8h1V664h-1zM423,647.8h1V664h-1zM460,647.8h2V664h-2zM560,647.8h1V664h-1zM758,647.8h1V664h-1zM811,647.8h1V664h-1zM838,647.8h2V664h-2zM849,647.8h1V664h-1zM960,647.8h1V664h-1zM975,647.8h3V664h-3zM1000,647.8h1V664h-1zM1013,647.8h6V664h-6zM1028,647.8h2V664h-2zM139,664h2V676.3h-2zM208,664h1V676.3h-1zM211,664h1V676.3h-1zM213,664h1V676.3h-1zM227,664h1V676.3h-1zM232,664h2V676.3h-2zM250,664h2V676.3h-2zM294,664h3V676.3h-3zM371,664h1V676.3h-1zM390,664h1V676.3h-1zM395,664h3V676.3h-3zM460,664h2V676.3h-2zM560,664h1V676.3h-1zM573,664h3V676.3h-3zM588,664h3V676.3h-3zM661,664h1V676.3h-1zM733,664h1V676.3h-1zM757,664h1V676.3h-1zM763,664h3V676.3h-3zM796,664h2V676.3h-2zM811,664h2V676.3h-2zM815,664h1V676.3h-1zM839,664h1V676.3h-1zM847,664h2V676.3h-2zM931,664h2V676.3h-2zM957,664h3V676.3h-3zM976,664h2V676.3h-2zM1000,664h3V676.3h-3zM1013,664h3V676.3h-3zM1018,664h1V676.3h-1zM1028,664h2V676.3h-2zM138,676.3h3V690.2h-3zM189,676.3h2V690.2h-2zM204,676.3h1V690.2h-1zM206,676.3h3V690.2h-3zM211,676.3h1V690.2h-1zM226,676.3h2V690.2h-2zM232,676.3h2V690.2h-2zM250,676.3h2V690.2h-2zM287,676.3h1V690.2h-1zM294,676.3h3V690.2h-3zM317,676.3h3V690.2h-3zM329,676.3h1V690.2h-1zM368,676.3h1V690.2h-1zM371,676.3h2V690.2h-2zM390,676.3h1V690.2h-1zM395,676.3h2V690.2h-2zM398,676.3h1V690.2h-1zM424,676.3h1V690.2h-1zM460,676.3h2V690.2h-2zM505,676.3h1V690.2h-1zM513,676.3h3V690.2h-3zM518,676.3h2V690.2h-2zM560,676.3h4V690.2h-4zM573,676.3h5V690.2h-5zM588,676.3h3V690.2h-3zM661,676.3h1V690.2h-1zM757,676.3h1V690.2h-1zM759,676.3h1V690.2h-1zM763,676.3h5V690.2h-5zM796,676.3h4V690.2h-4zM811,676.3h4V690.2h-4zM839,676.3h1V690.2h-1zM847,676.3h2V690.2h-2zM931,676.3h2V690.2h-2zM944,676.3h1V690.2h-1zM957,676.3h4V690.2h-4zM976,676.3h3V690.2h-3zM980,676.3h1V690.2h-1zM1000,676.3h3V690.2h-3zM1013,676.3h3V690.2h-3zM1018,676.3h1V690.2h-1zM1028,676.3h2V690.2h-2z" fill="url(#g4d)" shape-rendering="crispEdges"/>
<path d="M372,522h1V526h-1zM1037,522h1V526h-1zM1060,522h1V526h-1zM894,522h2V530h-2zM972,522h2V530h-2zM763,522h1V568.5h-1zM1072,522h2V568.5h-2zM168,522h1V580h-1zM633,522h2V580h-2zM619,522h2V585h-2zM781,522h1V585h-1zM1018,522h1V585h-1zM1068,522h2V585h-2zM96,526h1V552h-1zM487,526h1V564h-1zM450,526h1V580h-1zM782,526h2V584.8h-2zM614,530h1V552h-1zM669,530h1V552h-1zM1011,530h1V552h-1zM183,530h1V555h-1zM745,530h2V555h-2zM1029,530h1V555h-1zM179,530h1V564h-1zM340,530h2V564h-2zM1059,530h1V580h-1zM1064,530h1V580h-1zM624,530h1V584.8h-1zM1067,530h1V584.8h-1zM124,530h2V585h-2zM743,530h1V585h-1zM777,530h1V585h-1zM123,533h1V552h-1zM132,533h2V552h-2zM864,533h2V564h-2zM641,533h2V568.5h-2zM992,533h1V580h-1zM987,552h2V568.5h-2zM101,552h1V580h-1zM760,552h2V580h-2zM1037,552h1V585h-1zM833,555h1V568.5h-1zM131,555h1V580h-1zM372,555h1V580h-1zM589,555h2V580h-2zM647,555h1V580h-1zM602,555h1V584.8h-1zM726,555h2V584.8h-2zM224,555h1V585h-1zM1039,555h3V585h-3zM847,564h1V580h-1zM243,564h2V585h-2zM972,564h2V605.5h-2zM96,580h1V585h-1zM123,580h1V585h-1zM412,580h1V585h-1zM513,580h1V585h-1zM614,580h1V585h-1zM863,580h1V585h-1zM1030,580h1V585h-1zM1060,580h1V585h-1zM179,580h1V605.5h-1zM432,580h1V605.5h-1zM643,580h1V605.5h-1zM745,580h2V605.5h-2zM158,585h2V605.5h-2zM294,585h1V605.5h-1zM340,585h2V605.5h-2zM346,585h1V605.5h-1zM555,585h2V605.5h-2zM625,585h1V605.5h-1zM630,585h2V605.5h-2zM639,585h1V605.5h-1zM641,585h2V605.5h-2zM725,585h1V605.5h-1zM728,585h1V605.5h-1zM778,585h2V605.5h-2zM838,585h2V605.5h-2zM1008,585h1V605.5h-1zM1026,585h1V605.5h-1zM1079,585h2V605.5h-2zM696,585h1V618h-1zM760,585h2V618h-2zM853,585h2V618h-2zM157,585h1V630.5h-1zM487,585h1V630.5h-1zM224,605.5h1V618h-1zM372,605.5h1V618h-1zM406,605.5h1V618h-1zM777,605.5h1V618h-1zM946,605.5h2V618h-2zM987,605.5h2V618h-2zM131,605.5h1V630.5h-1zM1064,605.5h1V630.5h-1zM1076,605.5h2V630.5h-2zM101,618h1V630.5h-1zM158,618h2V630.5h-2zM183,618h1V630.5h-1zM555,618h2V630.5h-2zM778,618h2V630.5h-2zM992,618h1V630.5h-1zM1008,618h1V630.5h-1zM1022,618h1V630.5h-1zM1041,618h1V630.5h-1zM1050,618h2V630.5h-2zM1060,618h1V630.5h-1zM1063,618h1V630.5h-1zM1067,618h1V630.5h-1zM1070,618h2V630.5h-2zM1079,618h2V630.5h-2zM164,630.5h1V647.8h-1zM183,630.5h2V647.8h-2zM186,630.5h1V647.8h-1zM405,630.5h1V647.8h-1zM448,630.5h2V647.8h-2zM468,630.5h4V647.8h-4zM475,630.5h1V647.8h-1zM512,630.5h1V647.8h-1zM550,630.5h3V647.8h-3zM594,630.5h1V647.8h-1zM636,630.5h3V647.8h-3zM645,630.5h1V647.8h-1zM915,630.5h2V647.8h-2zM950,630.5h2V647.8h-2zM989,630.5h1V647.8h-1zM1033,630.5h1V647.8h-1zM1053,630.5h2V647.8h-2zM1077,630.5h2V647.8h-2zM163,647.8h2V664h-2zM209,647.8h2V664h-2zM405,647.8h1V664h-1zM436,647.8h2V664h-2zM443,647.8h3V664h-3zM466,647.8h4V664h-4zM511,647.8h2V664h-2zM594,647.8h1V664h-1zM636,647.8h3V664h-3zM645,647.8h1V664h-1zM828,647.8h2V664h-2zM913,647.8h2V664h-2zM963,647.8h2V664h-2zM987,647.8h2V664h-2zM1031,647.8h3V664h-3zM1049,647.8h4V664h-4zM1077,647.8h3V664h-3zM160,664h4V676.3h-4zM201,664h1V676.3h-1zM209,664h2V676.3h-2zM405,664h1V676.3h-1zM436,664h2V676.3h-2zM443,664h4V676.3h-4zM466,664h3V676.3h-3zM470,664h2V676.3h-2zM476,664h1V676.3h-1zM594,664h1V676.3h-1zM620,664h3V676.3h-3zM628,664h1V676.3h-1zM636,664h9V676.3h-9zM646,664h2V676.3h-2zM693,664h2V676.3h-2zM783,664h1V676.3h-1zM801,664h1V676.3h-1zM913,664h1V676.3h-1zM915,664h3V676.3h-3zM951,664h2V676.3h-2zM1030,664h3V676.3h-3zM1049,664h4V676.3h-4zM1078,664h1V676.3h-1zM105,676.3h1V690.2h-1zM160,676.3h4V690.2h-4zM181,676.3h1V690.2h-1zM201,676.3h1V690.2h-1zM209,676.3h2V690.2h-2zM343,676.3h2V690.2h-2zM386,676.3h1V690.2h-1zM405,676.3h1V690.2h-1zM436,676.3h2V690.2h-2zM443,676.3h4V690.2h-4zM448,676.3h2V690.2h-2zM466,676.3h3V690.2h-3zM470,676.3h2V690.2h-2zM473,676.3h4V690.2h-4zM507,676.3h2V690.2h-2zM591,676.3h1V690.2h-1zM594,676.3h3V690.2h-3zM620,676.3h3V690.2h-3zM627,676.3h2V690.2h-2zM633,676.3h15V690.2h-15zM693,676.3h2V690.2h-2zM706,676.3h4V690.2h-4zM715,676.3h2V690.2h-2zM783,676.3h1V690.2h-1zM788,676.3h1V690.2h-1zM801,676.3h1V690.2h-1zM828,676.3h2V690.2h-2zM913,676.3h1V690.2h-1zM915,676.3h3V690.2h-3zM951,676.3h2V690.2h-2zM963,676.3h2V690.2h-2zM989,676.3h2V690.2h-2zM1030,676.3h3V690.2h-3zM1049,676.3h4V690.2h-4zM1077,676.3h2V690.2h-2z" fill="url(#g4b)" shape-rendering="crispEdges"/>
<path d="M1011,630.5h1V647.8h-1zM1024,630.5h4V647.8h-4zM1034,630.5h3V647.8h-3zM1039,630.5h3V647.8h-3zM1044,630.5h4V647.8h-4zM1055,630.5h2V647.8h-2zM1059,630.5h9V647.8h-9zM1070,630.5h1V647.8h-1zM1074,630.5h1V647.8h-1zM1076,630.5h1V647.8h-1zM1012,647.8h1V664h-1zM1019,647.8h1V664h-1zM1022,647.8h6V664h-6zM1034,647.8h15V664h-15zM1056,647.8h21V664h-21zM1011,664h2V676.3h-2zM1019,664h1V676.3h-1zM1022,664h6V676.3h-6zM1035,664h3V676.3h-3zM1039,664h2V676.3h-2zM1042,664h7V676.3h-7zM1056,664h3V676.3h-3zM1061,664h3V676.3h-3zM1065,664h3V676.3h-3zM1071,664h1V676.3h-1zM1074,664h2V676.3h-2zM1009,676.3h4V690.2h-4zM1019,676.3h9V690.2h-9zM1035,676.3h3V690.2h-3zM1039,676.3h2V690.2h-2zM1042,676.3h7V690.2h-7zM1055,676.3h4V690.2h-4zM1063,676.3h1V690.2h-1zM1065,676.3h3V690.2h-3zM1071,676.3h1V690.2h-1zM1075,676.3h1V690.2h-1z" fill="url(#g4B)" shape-rendering="crispEdges"/>
<rect x="95.50" y="695.50" width="985.00" height="15.00" fill="#00ff00" stroke="#111" stroke-width="1"/>
<rect x="95.00" y="695.00" width="2.00" height="16.00" fill="#111" />
<text x="79.6" y="708.0" text-anchor="end" font-size="12" textLength="50.4" lengthAdjust="spacing" >Sunlight?</text>
<line x1="136.50" y1="711.00" x2="136.50" y2="714.50" stroke="#1a1a1a" stroke-width="1" />
<line x1="177.50" y1="711.00" x2="177.50" y2="714.50" stroke="#1a1a1a" stroke-width="1" />
<line x1="218.50" y1="711.00" x2="218.50" y2="718.00" stroke="#1a1a1a" stroke-width="1" />
<line x1="259.50" y1="711.00" x2="259.50" y2="714.50" stroke="#1a1a1a" stroke-width="1" />
<line x1="300.50" y1="711.00" x2="300.50" y2="714.50" stroke="#1a1a1a" stroke-width="1" />
<line x1="341.50" y1="711.00" x2="341.50" y2="718.00" stroke="#1a1a1a" stroke-width="1" />
<line x1="382.50" y1="711.00" x2="382.50" y2="714.50" stroke="#1a1a1a" stroke-width="1" />
<line x1="423.50" y1="711.00" x2="423.50" y2="714.50" stroke="#1a1a1a" stroke-width="1" />
<line x1="464.50" y1="711.00" x2="464.50" y2="718.00" stroke="#1a1a1a" stroke-width="1" />
<line x1="505.50" y1="711.00" x2="505.50" y2="714.50" stroke="#1a1a1a" stroke-width="1" />
<line x1="546.50" y1="711.00" x2="546.50" y2="714.50" stroke="#1a1a1a" stroke-width="1" />
<line x1="587.50" y1="711.00" x2="587.50" y2="718.00" stroke="#1a1a1a" stroke-width="1" />
<line x1="628.50" y1="711.00" x2="628.50" y2="714.50" stroke="#1a1a1a" stroke-width="1" />
<line x1="669.50" y1="711.00" x2="669.50" y2="714.50" stroke="#1a1a1a" stroke-width="1" />
<line x1="710.50" y1="711.00" x2="710.50" y2="718.00" stroke="#1a1a1a" stroke-width="1" />
<line x1="751.50" y1="711.00" x2="751.50" y2="714.50" stroke="#1a1a1a" stroke-width="1" />
<line x1="792.50" y1="711.00" x2="792.50" y2="714.50" stroke="#1a1a1a" stroke-width="1" />
<line x1="833.50" y1="711.00" x2="833.50" y2="718.00" stroke="#1a1a1a" stroke-width="1" />
<line x1="874.50" y1="711.00" x2="874.50" y2="714.50" stroke="#1a1a1a" stroke-width="1" />
<line x1="915.50" y1="711.00" x2="915.50" y2="714.50" stroke="#1a1a1a" stroke-width="1" />
<line x1="956.50" y1="711.00" x2="956.50" y2="718.00" stroke="#1a1a1a" stroke-width="1" />
<line x1="997.50" y1="711.00" x2="997.50" y2="714.50" stroke="#1a1a1a" stroke-width="1" />
<line x1="1038.50" y1="711.00" x2="1038.50" y2="714.50" stroke="#1a1a1a" stroke-width="1" />
<line x1="1080.50" y1="711.00" x2="1080.50" y2="718.00" stroke="#1a1a1a" stroke-width="1" />
<text x="218.1" y="734.0" text-anchor="middle" font-size="12" textLength="36.4" lengthAdjust="spacing" >03:00</text>
<text x="218.1" y="749.0" text-anchor="middle" font-size="12" textLength="35.0" lengthAdjust="spacing" >16.03</text>
<text x="218.1" y="764.0" text-anchor="middle" font-size="12" textLength="35.0" lengthAdjust="spacing" >40.13</text>
<text x="218.1" y="779.0" text-anchor="middle" font-size="12" textLength="35.0" lengthAdjust="spacing" >50.03</text>
<text x="341.1" y="734.0" text-anchor="middle" font-size="12" textLength="36.4" lengthAdjust="spacing" >06:00</text>
<text x="341.1" y="749.0" text-anchor="middle" font-size="12" textLength="35.0" lengthAdjust="spacing" >16.06</text>
<text x="341.1" y="764.0" text-anchor="middle" font-size="12" textLength="35.0" lengthAdjust="spacing" >40.06</text>
<text x="341.1" y="779.0" text-anchor="middle" font-size="12" textLength="35.0" lengthAdjust="spacing" >49.94</text>
<text x="464.1" y="734.0" text-anchor="middle" font-size="12" textLength="36.4" lengthAdjust="spacing" >09:00</text>
<text x="464.1" y="749.0" text-anchor="middle" font-size="12" textLength="35.0" lengthAdjust="spacing" >16.09</text>
<text x="464.1" y="764.0" text-anchor="middle" font-size="12" textLength="35.0" lengthAdjust="spacing" >39.98</text>
<text x="464.1" y="779.0" text-anchor="middle" font-size="12" textLength="35.0" lengthAdjust="spacing" >49.83</text>
<text x="587.1" y="734.0" text-anchor="middle" font-size="12" textLength="36.4" lengthAdjust="spacing" >12:00</text>
<text x="587.1" y="749.0" text-anchor="middle" font-size="12" textLength="35.0" lengthAdjust="spacing" >16.11</text>
<text x="587.1" y="764.0" text-anchor="middle" font-size="12" textLength="35.0" lengthAdjust="spacing" >39.89</text>
<text x="587.1" y="779.0" text-anchor="middle" font-size="12" textLength="35.0" lengthAdjust="spacing" >49.70</text>
<text x="710.1" y="734.0" text-anchor="middle" font-size="12" textLength="36.4" lengthAdjust="spacing" >15:00</text>
<text x="710.1" y="749.0" text-anchor="middle" font-size="12" textLength="35.0" lengthAdjust="spacing" >16.14</text>
<text x="710.1" y="764.0" text-anchor="middle" font-size="12" textLength="35.0" lengthAdjust="spacing" >39.79</text>
<text x="710.1" y="779.0" text-anchor="middle" font-size="12" textLength="35.0" lengthAdjust="spacing" >49.56</text>
<text x="833.1" y="734.0" text-anchor="middle" font-size="12" textLength="36.4" lengthAdjust="spacing" >18:00</text>
<text x="833.1" y="749.0" text-anchor="middle" font-size="12" textLength="35.0" lengthAdjust="spacing" >16.17</text>
<text x="833.1" y="764.0" text-anchor="middle" font-size="12" textLength="35.0" lengthAdjust="spacing" >39.68</text>
<text x="833.1" y="779.0" text-anchor="middle" font-size="12" textLength="35.0" lengthAdjust="spacing" >49.41</text>
<text x="956.1" y="734.0" text-anchor="middle" font-size="12" textLength="36.4" lengthAdjust="spacing" >21:00</text>
<text x="956.1" y="749.0" text-anchor="middle" font-size="12" textLength="35.0" lengthAdjust="spacing" >16.20</text>
<text x="956.1" y="764.0" text-anchor="middle" font-size="12" textLength="35.0" lengthAdjust="spacing" >39.56</text>
<text x="956.1" y="779.0" text-anchor="middle" font-size="12" textLength="35.0" lengthAdjust="spacing" >49.24</text>
<text x="1080.1" y="734.0" text-anchor="middle" font-size="12" textLength="36.4" lengthAdjust="spacing" >00:00</text>
<text x="1080.1" y="749.0" text-anchor="middle" font-size="12" textLength="35.0" lengthAdjust="spacing" >16.23</text>
<text x="1080.1" y="764.0" text-anchor="middle" font-size="12" textLength="35.0" lengthAdjust="spacing" >39.43</text>
<text x="1080.1" y="779.0" text-anchor="middle" font-size="12" textLength="35.0" lengthAdjust="spacing" >49.06</text>
<text x="60.3" y="749.0" text-anchor="end" font-size="12" textLength="45.2" lengthAdjust="spacing" xml:space="preserve">LT (hrs)</text>
<text x="60.3" y="764.0" text-anchor="end" font-size="12" >Rs</text>
<text x="60.5" y="779.0" text-anchor="end" font-size="12" textLength="47.9" lengthAdjust="spacing" >Dipole L</text>
<rect x="1092.00" y="30.00" width="12.50" height="190.50" fill="url(#cb)" />
<line x1="1104.50" y1="29.50" x2="1104.50" y2="221.00" stroke="#1a1a1a" stroke-width="1" />
<line x1="1104.50" y1="29.60" x2="1113.00" y2="29.60" stroke="#1a1a1a" stroke-width="1" />
<text x="1117.0" y="37.0" text-anchor="start" font-size="12">10<tspan dy="-6.1" dx="1.1" font-size="14">-</tspan><tspan dx="1.2" font-size="10.8">9</tspan></text>
<line x1="1104.50" y1="87.20" x2="1113.00" y2="87.20" stroke="#1a1a1a" stroke-width="1" />
<text x="1117.0" y="94.6" text-anchor="start" font-size="12">10<tspan dy="-6.1" dx="1.1" font-size="14">-</tspan><tspan dx="1.2" font-size="10.8">10</tspan></text>
<line x1="1104.50" y1="69.86" x2="1109.00" y2="69.86" stroke="#1a1a1a" stroke-width="1" />
<line x1="1104.50" y1="59.72" x2="1109.00" y2="59.72" stroke="#1a1a1a" stroke-width="1" />
<line x1="1104.50" y1="52.52" x2="1109.00" y2="52.52" stroke="#1a1a1a" stroke-width="1" />
<line x1="1104.50" y1="46.94" x2="1109.00" y2="46.94" stroke="#1a1a1a" stroke-width="1" />
<line x1="1104.50" y1="42.38" x2="1109.00" y2="42.38" stroke="#1a1a1a" stroke-width="1" />
<line x1="1104.50" y1="38.52" x2="1109.00" y2="38.52" stroke="#1a1a1a" stroke-width="1" />
<line x1="1104.50" y1="35.18" x2="1109.00" y2="35.18" stroke="#1a1a1a" stroke-width="1" />
<line x1="1104.50" y1="32.24" x2="1109.00" y2="32.24" stroke="#1a1a1a" stroke-width="1" />
<line x1="1104.50" y1="144.80" x2="1113.00" y2="144.80" stroke="#1a1a1a" stroke-width="1" />
<text x="1117.0" y="152.2" text-anchor="start" font-size="12">10<tspan dy="-6.1" dx="1.1" font-size="14">-</tspan><tspan dx="1.2" font-size="10.8">11</tspan></text>
<line x1="1104.50" y1="127.46" x2="1109.00" y2="127.46" stroke="#1a1a1a" stroke-width="1" />
<line x1="1104.50" y1="117.32" x2="1109.00" y2="117.32" stroke="#1a1a1a" stroke-width="1" />
<line x1="1104.50" y1="110.12" x2="1109.00" y2="110.12" stroke="#1a1a1a" stroke-width="1" />
<line x1="1104.50" y1="104.54" x2="1109.00" y2="104.54" stroke="#1a1a1a" stroke-width="1" />
<line x1="1104.50" y1="99.98" x2="1109.00" y2="99.98" stroke="#1a1a1a" stroke-width="1" />
<line x1="1104.50" y1="96.12" x2="1109.00" y2="96.12" stroke="#1a1a1a" stroke-width="1" />
<line x1="1104.50" y1="92.78" x2="1109.00" y2="92.78" stroke="#1a1a1a" stroke-width="1" />
<line x1="1104.50" y1="89.84" x2="1109.00" y2="89.84" stroke="#1a1a1a" stroke-width="1" />
<line x1="1104.50" y1="202.40" x2="1113.00" y2="202.40" stroke="#1a1a1a" stroke-width="1" />
<text x="1117.0" y="209.8" text-anchor="start" font-size="12">10<tspan dy="-6.1" dx="1.1" font-size="14">-</tspan><tspan dx="1.2" font-size="10.8">12</tspan></text>
<line x1="1104.50" y1="185.06" x2="1109.00" y2="185.06" stroke="#1a1a1a" stroke-width="1" />
<line x1="1104.50" y1="174.92" x2="1109.00" y2="174.92" stroke="#1a1a1a" stroke-width="1" />
<line x1="1104.50" y1="167.72" x2="1109.00" y2="167.72" stroke="#1a1a1a" stroke-width="1" />
<line x1="1104.50" y1="162.14" x2="1109.00" y2="162.14" stroke="#1a1a1a" stroke-width="1" />
<line x1="1104.50" y1="157.58" x2="1109.00" y2="157.58" stroke="#1a1a1a" stroke-width="1" />
<line x1="1104.50" y1="153.72" x2="1109.00" y2="153.72" stroke="#1a1a1a" stroke-width="1" />
<line x1="1104.50" y1="150.38" x2="1109.00" y2="150.38" stroke="#1a1a1a" stroke-width="1" />
<line x1="1104.50" y1="147.44" x2="1109.00" y2="147.44" stroke="#1a1a1a" stroke-width="1" />
<line x1="1104.50" y1="219.74" x2="1109.00" y2="219.74" stroke="#1a1a1a" stroke-width="1" />
<line x1="1104.50" y1="215.18" x2="1109.00" y2="215.18" stroke="#1a1a1a" stroke-width="1" />
<line x1="1104.50" y1="211.32" x2="1109.00" y2="211.32" stroke="#1a1a1a" stroke-width="1" />
<line x1="1104.50" y1="207.98" x2="1109.00" y2="207.98" stroke="#1a1a1a" stroke-width="1" />
<line x1="1104.50" y1="205.04" x2="1109.00" y2="205.04" stroke="#1a1a1a" stroke-width="1" />
<text transform="translate(1164.8,123.5) rotate(90)" text-anchor="middle" font-size="12" textLength="120.9" lengthAdjust="spacing">pressure dyne/cm^2</text>
<rect x="1092.00" y="226.00" width="12.50" height="189.50" fill="url(#cb)" />
<line x1="1104.50" y1="225.50" x2="1104.50" y2="416.00" stroke="#1a1a1a" stroke-width="1" />
<line x1="1104.50" y1="225.10" x2="1113.00" y2="225.10" stroke="#1a1a1a" stroke-width="1" />
<text x="1117.0" y="232.5" text-anchor="start" font-size="12">10<tspan dy="-6.1" dx="1.1" font-size="14">-</tspan><tspan dx="1.2" font-size="10.8">9</tspan></text>
<line x1="1104.50" y1="282.70" x2="1113.00" y2="282.70" stroke="#1a1a1a" stroke-width="1" />
<text x="1117.0" y="290.1" text-anchor="start" font-size="12">10<tspan dy="-6.1" dx="1.1" font-size="14">-</tspan><tspan dx="1.2" font-size="10.8">10</tspan></text>
<line x1="1104.50" y1="265.36" x2="1109.00" y2="265.36" stroke="#1a1a1a" stroke-width="1" />
<line x1="1104.50" y1="255.22" x2="1109.00" y2="255.22" stroke="#1a1a1a" stroke-width="1" />
<line x1="1104.50" y1="248.02" x2="1109.00" y2="248.02" stroke="#1a1a1a" stroke-width="1" />
<line x1="1104.50" y1="242.44" x2="1109.00" y2="242.44" stroke="#1a1a1a" stroke-width="1" />
<line x1="1104.50" y1="237.88" x2="1109.00" y2="237.88" stroke="#1a1a1a" stroke-width="1" />
<line x1="1104.50" y1="234.02" x2="1109.00" y2="234.02" stroke="#1a1a1a" stroke-width="1" />
<line x1="1104.50" y1="230.68" x2="1109.00" y2="230.68" stroke="#1a1a1a" stroke-width="1" />
<line x1="1104.50" y1="227.74" x2="1109.00" y2="227.74" stroke="#1a1a1a" stroke-width="1" />
<line x1="1104.50" y1="340.30" x2="1113.00" y2="340.30" stroke="#1a1a1a" stroke-width="1" />
<text x="1117.0" y="347.7" text-anchor="start" font-size="12">10<tspan dy="-6.1" dx="1.1" font-size="14">-</tspan><tspan dx="1.2" font-size="10.8">11</tspan></text>
<line x1="1104.50" y1="322.96" x2="1109.00" y2="322.96" stroke="#1a1a1a" stroke-width="1" />
<line x1="1104.50" y1="312.82" x2="1109.00" y2="312.82" stroke="#1a1a1a" stroke-width="1" />
<line x1="1104.50" y1="305.62" x2="1109.00" y2="305.62" stroke="#1a1a1a" stroke-width="1" />
<line x1="1104.50" y1="300.04" x2="1109.00" y2="300.04" stroke="#1a1a1a" stroke-width="1" />
<line x1="1104.50" y1="295.48" x2="1109.00" y2="295.48" stroke="#1a1a1a" stroke-width="1" />
<line x1="1104.50" y1="291.62" x2="1109.00" y2="291.62" stroke="#1a1a1a" stroke-width="1" />
<line x1="1104.50" y1="288.28" x2="1109.00" y2="288.28" stroke="#1a1a1a" stroke-width="1" />
<line x1="1104.50" y1="285.34" x2="1109.00" y2="285.34" stroke="#1a1a1a" stroke-width="1" />
<line x1="1104.50" y1="397.90" x2="1113.00" y2="397.90" stroke="#1a1a1a" stroke-width="1" />
<text x="1117.0" y="405.3" text-anchor="start" font-size="12">10<tspan dy="-6.1" dx="1.1" font-size="14">-</tspan><tspan dx="1.2" font-size="10.8">12</tspan></text>
<line x1="1104.50" y1="380.56" x2="1109.00" y2="380.56" stroke="#1a1a1a" stroke-width="1" />
<line x1="1104.50" y1="370.42" x2="1109.00" y2="370.42" stroke="#1a1a1a" stroke-width="1" />
<line x1="1104.50" y1="363.22" x2="1109.00" y2="363.22" stroke="#1a1a1a" stroke-width="1" />
<line x1="1104.50" y1="357.64" x2="1109.00" y2="357.64" stroke="#1a1a1a" stroke-width="1" />
<line x1="1104.50" y1="353.08" x2="1109.00" y2="353.08" stroke="#1a1a1a" stroke-width="1" />
<line x1="1104.50" y1="349.22" x2="1109.00" y2="349.22" stroke="#1a1a1a" stroke-width="1" />
<line x1="1104.50" y1="345.88" x2="1109.00" y2="345.88" stroke="#1a1a1a" stroke-width="1" />
<line x1="1104.50" y1="342.94" x2="1109.00" y2="342.94" stroke="#1a1a1a" stroke-width="1" />
<line x1="1104.50" y1="415.24" x2="1109.00" y2="415.24" stroke="#1a1a1a" stroke-width="1" />
<line x1="1104.50" y1="410.68" x2="1109.00" y2="410.68" stroke="#1a1a1a" stroke-width="1" />
<line x1="1104.50" y1="406.82" x2="1109.00" y2="406.82" stroke="#1a1a1a" stroke-width="1" />
<line x1="1104.50" y1="403.48" x2="1109.00" y2="403.48" stroke="#1a1a1a" stroke-width="1" />
<line x1="1104.50" y1="400.54" x2="1109.00" y2="400.54" stroke="#1a1a1a" stroke-width="1" />
<text transform="translate(1164.8,319) rotate(90)" text-anchor="middle" font-size="12" textLength="120.9" lengthAdjust="spacing">pressure dyne/cm^2</text>
<rect x="1092.00" y="515.00" width="12.50" height="176.50" fill="url(#cb)" />
<line x1="1104.50" y1="514.50" x2="1104.50" y2="692.00" stroke="#1a1a1a" stroke-width="1" />
<line x1="1104.50" y1="515.20" x2="1113.00" y2="515.20" stroke="#1a1a1a" stroke-width="1" />
<text x="1117.0" y="522.6" text-anchor="start" font-size="12">10<tspan dy="-6.1" dx="1.4" font-size="10.8">4</tspan></text>
<line x1="1104.50" y1="534.75" x2="1109.00" y2="534.75" stroke="#1a1a1a" stroke-width="1" />
<line x1="1104.50" y1="554.30" x2="1113.00" y2="554.30" stroke="#1a1a1a" stroke-width="1" />
<text x="1117.0" y="561.7" text-anchor="start" font-size="12">10<tspan dy="-6.1" dx="1.4" font-size="10.8">2</tspan></text>
<line x1="1104.50" y1="573.85" x2="1109.00" y2="573.85" stroke="#1a1a1a" stroke-width="1" />
<line x1="1104.50" y1="593.40" x2="1113.00" y2="593.40" stroke="#1a1a1a" stroke-width="1" />
<text x="1117.0" y="600.8" text-anchor="start" font-size="12">10<tspan dy="-6.1" dx="1.4" font-size="10.8">0</tspan></text>
<line x1="1104.50" y1="612.95" x2="1109.00" y2="612.95" stroke="#1a1a1a" stroke-width="1" />
<line x1="1104.50" y1="632.50" x2="1113.00" y2="632.50" stroke="#1a1a1a" stroke-width="1" />
<text x="1117.0" y="639.9" text-anchor="start" font-size="12">10<tspan dy="-6.1" dx="1.1" font-size="14">-</tspan><tspan dx="1.2" font-size="10.8">2</tspan></text>
<line x1="1104.50" y1="652.05" x2="1109.00" y2="652.05" stroke="#1a1a1a" stroke-width="1" />
<line x1="1104.50" y1="671.60" x2="1113.00" y2="671.60" stroke="#1a1a1a" stroke-width="1" />
<text x="1117.0" y="679.0" text-anchor="start" font-size="12">10<tspan dy="-6.1" dx="1.1" font-size="14">-</tspan><tspan dx="1.2" font-size="10.8">4</tspan></text>
<line x1="1104.50" y1="691.15" x2="1109.00" y2="691.15" stroke="#1a1a1a" stroke-width="1" />
<text transform="translate(1156.3,601.5) rotate(90)" text-anchor="middle" font-size="12" textLength="168.4" lengthAdjust="spacing">intensity 1/(s cm^2 ster keV)</text>
<line x1="1091.00" y1="426.50" x2="1103.00" y2="431.50" stroke="#0000ff" stroke-width="1.5" />
<text x="1107.5" y="433.5" text-anchor="start" font-size="12" >CHEMS-P</text>
<line x1="1091.00" y1="443.50" x2="1103.00" y2="448.50" stroke="#ff0000" stroke-width="1.5" />
<text x="1107.5" y="450.5" text-anchor="start" font-size="12" >LEMMS-P</text>
<line x1="1091.00" y1="460.50" x2="1103.00" y2="465.50" stroke="#00ff00" stroke-width="1.5" />
<text x="1107.5" y="467.5" text-anchor="start" font-size="12" >CHEMS-O</text>
<rect x="215.5" y="802.5" width="151.0" height="148.0" fill="#fff" stroke="#1a1a1a" stroke-width="1"/>
<line x1="207.0" y1="803.50" x2="215.5" y2="803.50" stroke="#1a1a1a" stroke-width="1"/>
<line x1="211.0" y1="804.50" x2="215.5" y2="804.50" stroke="#1a1a1a" stroke-width="1"/>
<line x1="211.0" y1="806.50" x2="215.5" y2="806.50" stroke="#1a1a1a" stroke-width="1"/>
<line x1="211.0" y1="808.50" x2="215.5" y2="808.50" stroke="#1a1a1a" stroke-width="1"/>
<line x1="211.0" y1="810.50" x2="215.5" y2="810.50" stroke="#1a1a1a" stroke-width="1"/>
<line x1="211.0" y1="812.50" x2="215.5" y2="812.50" stroke="#1a1a1a" stroke-width="1"/>
<line x1="211.0" y1="814.50" x2="215.5" y2="814.50" stroke="#1a1a1a" stroke-width="1"/>
<line x1="211.0" y1="815.50" x2="215.5" y2="815.50" stroke="#1a1a1a" stroke-width="1"/>
<line x1="211.0" y1="817.50" x2="215.5" y2="817.50" stroke="#1a1a1a" stroke-width="1"/>
<line x1="211.0" y1="819.50" x2="215.5" y2="819.50" stroke="#1a1a1a" stroke-width="1"/>
<line x1="207.0" y1="821.50" x2="215.5" y2="821.50" stroke="#1a1a1a" stroke-width="1"/>
<line x1="211.0" y1="823.50" x2="215.5" y2="823.50" stroke="#1a1a1a" stroke-width="1"/>
<line x1="211.0" y1="825.50" x2="215.5" y2="825.50" stroke="#1a1a1a" stroke-width="1"/>
<line x1="211.0" y1="826.50" x2="215.5" y2="826.50" stroke="#1a1a1a" stroke-width="1"/>
<line x1="211.0" y1="828.50" x2="215.5" y2="828.50" stroke="#1a1a1a" stroke-width="1"/>
<line x1="211.0" y1="830.50" x2="215.5" y2="830.50" stroke="#1a1a1a" stroke-width="1"/>
<line x1="211.0" y1="832.50" x2="215.5" y2="832.50" stroke="#1a1a1a" stroke-width="1"/>
<line x1="211.0" y1="834.50" x2="215.5" y2="834.50" stroke="#1a1a1a" stroke-width="1"/>
<line x1="211.0" y1="836.50" x2="215.5" y2="836.50" stroke="#1a1a1a" stroke-width="1"/>
<line x1="211.0" y1="837.50" x2="215.5" y2="837.50" stroke="#1a1a1a" stroke-width="1"/>
<line x1="207.0" y1="839.50" x2="215.5" y2="839.50" stroke="#1a1a1a" stroke-width="1"/>
<line x1="211.0" y1="841.50" x2="215.5" y2="841.50" stroke="#1a1a1a" stroke-width="1"/>
<line x1="211.0" y1="843.50" x2="215.5" y2="843.50" stroke="#1a1a1a" stroke-width="1"/>
<line x1="211.0" y1="845.50" x2="215.5" y2="845.50" stroke="#1a1a1a" stroke-width="1"/>
<line x1="211.0" y1="847.50" x2="215.5" y2="847.50" stroke="#1a1a1a" stroke-width="1"/>
<line x1="211.0" y1="848.50" x2="215.5" y2="848.50" stroke="#1a1a1a" stroke-width="1"/>
<line x1="211.0" y1="850.50" x2="215.5" y2="850.50" stroke="#1a1a1a" stroke-width="1"/>
<line x1="211.0" y1="852.50" x2="215.5" y2="852.50" stroke="#1a1a1a" stroke-width="1"/>
<line x1="211.0" y1="854.50" x2="215.5" y2="854.50" stroke="#1a1a1a" stroke-width="1"/>
<line x1="211.0" y1="856.50" x2="215.5" y2="856.50" stroke="#1a1a1a" stroke-width="1"/>
<line x1="207.0" y1="858.50" x2="215.5" y2="858.50" stroke="#1a1a1a" stroke-width="1"/>
<line x1="211.0" y1="859.50" x2="215.5" y2="859.50" stroke="#1a1a1a" stroke-width="1"/>
<line x1="211.0" y1="861.50" x2="215.5" y2="861.50" stroke="#1a1a1a" stroke-width="1"/>
<line x1="211.0" y1="863.50" x2="215.5" y2="863.50" stroke="#1a1a1a" stroke-width="1"/>
<line x1="211.0" y1="865.50" x2="215.5" y2="865.50" stroke="#1a1a1a" stroke-width="1"/>
<line x1="211.0" y1="867.50" x2="215.5" y2="867.50" stroke="#1a1a1a" stroke-width="1"/>
<line x1="211.0" y1="869.50" x2="215.5" y2="869.50" stroke="#1a1a1a" stroke-width="1"/>
<line x1="211.0" y1="870.50" x2="215.5" y2="870.50" stroke="#1a1a1a" stroke-width="1"/>
<line x1="211.0" y1="872.50" x2="215.5" y2="872.50" stroke="#1a1a1a" stroke-width="1"/>
<line x1="211.0" y1="874.50" x2="215.5" y2="874.50" stroke="#1a1a1a" stroke-width="1"/>
<line x1="207.0" y1="876.50" x2="215.5" y2="876.50" stroke="#1a1a1a" stroke-width="1"/>
<line x1="211.0" y1="878.50" x2="215.5" y2="878.50" stroke="#1a1a1a" stroke-width="1"/>
<line x1="211.0" y1="880.50" x2="215.5" y2="880.50" stroke="#1a1a1a" stroke-width="1"/>
<line x1="211.0" y1="882.50" x2="215.5" y2="882.50" stroke="#1a1a1a" stroke-width="1"/>
<line x1="211.0" y1="883.50" x2="215.5" y2="883.50" stroke="#1a1a1a" stroke-width="1"/>
<line x1="211.0" y1="885.50" x2="215.5" y2="885.50" stroke="#1a1a1a" stroke-width="1"/>
<line x1="211.0" y1="887.50" x2="215.5" y2="887.50" stroke="#1a1a1a" stroke-width="1"/>
<line x1="211.0" y1="889.50" x2="215.5" y2="889.50" stroke="#1a1a1a" stroke-width="1"/>
<line x1="211.0" y1="891.50" x2="215.5" y2="891.50" stroke="#1a1a1a" stroke-width="1"/>
<line x1="211.0" y1="893.50" x2="215.5" y2="893.50" stroke="#1a1a1a" stroke-width="1"/>
<line x1="207.0" y1="894.50" x2="215.5" y2="894.50" stroke="#1a1a1a" stroke-width="1"/>
<line x1="211.0" y1="896.50" x2="215.5" y2="896.50" stroke="#1a1a1a" stroke-width="1"/>
<line x1="211.0" y1="898.50" x2="215.5" y2="898.50" stroke="#1a1a1a" stroke-width="1"/>
<line x1="211.0" y1="900.50" x2="215.5" y2="900.50" stroke="#1a1a1a" stroke-width="1"/>
<line x1="211.0" y1="902.50" x2="215.5" y2="902.50" stroke="#1a1a1a" stroke-width="1"/>
<line x1="211.0" y1="904.50" x2="215.5" y2="904.50" stroke="#1a1a1a" stroke-width="1"/>
<line x1="211.0" y1="905.50" x2="215.5" y2="905.50" stroke="#1a1a1a" stroke-width="1"/>
<line x1="211.0" y1="907.50" x2="215.5" y2="907.50" stroke="#1a1a1a" stroke-width="1"/>
<line x1="211.0" y1="909.50" x2="215.5" y2="909.50" stroke="#1a1a1a" stroke-width="1"/>
<line x1="211.0" y1="911.50" x2="215.5" y2="911.50" stroke="#1a1a1a" stroke-width="1"/>
<line x1="207.0" y1="913.50" x2="215.5" y2="913.50" stroke="#1a1a1a" stroke-width="1"/>
<line x1="211.0" y1="915.50" x2="215.5" y2="915.50" stroke="#1a1a1a" stroke-width="1"/>
<line x1="211.0" y1="916.50" x2="215.5" y2="916.50" stroke="#1a1a1a" stroke-width="1"/>
<line x1="211.0" y1="918.50" x2="215.5" y2="918.50" stroke="#1a1a1a" stroke-width="1"/>
<line x1="211.0" y1="920.50" x2="215.5" y2="920.50" stroke="#1a1a1a" stroke-width="1"/>
<line x1="211.0" y1="922.50" x2="215.5" y2="922.50" stroke="#1a1a1a" stroke-width="1"/>
<line x1="211.0" y1="924.50" x2="215.5" y2="924.50" stroke="#1a1a1a" stroke-width="1"/>
<line x1="211.0" y1="926.50" x2="215.5" y2="926.50" stroke="#1a1a1a" stroke-width="1"/>
<line x1="211.0" y1="927.50" x2="215.5" y2="927.50" stroke="#1a1a1a" stroke-width="1"/>
<line x1="211.0" y1="929.50" x2="215.5" y2="929.50" stroke="#1a1a1a" stroke-width="1"/>
<line x1="207.0" y1="931.50" x2="215.5" y2="931.50" stroke="#1a1a1a" stroke-width="1"/>
<line x1="211.0" y1="933.50" x2="215.5" y2="933.50" stroke="#1a1a1a" stroke-width="1"/>
<line x1="211.0" y1="935.50" x2="215.5" y2="935.50" stroke="#1a1a1a" stroke-width="1"/>
<line x1="211.0" y1="937.50" x2="215.5" y2="937.50" stroke="#1a1a1a" stroke-width="1"/>
<line x1="211.0" y1="938.50" x2="215.5" y2="938.50" stroke="#1a1a1a" stroke-width="1"/>
<line x1="211.0" y1="940.50" x2="215.5" y2="940.50" stroke="#1a1a1a" stroke-width="1"/>
<line x1="211.0" y1="942.50" x2="215.5" y2="942.50" stroke="#1a1a1a" stroke-width="1"/>
<line x1="211.0" y1="944.50" x2="215.5" y2="944.50" stroke="#1a1a1a" stroke-width="1"/>
<line x1="211.0" y1="946.50" x2="215.5" y2="946.50" stroke="#1a1a1a" stroke-width="1"/>
<line x1="211.0" y1="948.50" x2="215.5" y2="948.50" stroke="#1a1a1a" stroke-width="1"/>
<line x1="207.0" y1="950.50" x2="215.5" y2="950.50" stroke="#1a1a1a" stroke-width="1"/>
<text x="201.5" y="807.9" text-anchor="end" font-size="12">-40.</text>
<text x="201.5" y="826.3" text-anchor="end" font-size="12">-30.</text>
<text x="201.5" y="844.6" text-anchor="end" font-size="12">-20.</text>
<text x="201.5" y="863.0" text-anchor="end" font-size="12">-10.</text>
<text x="201.5" y="881.4" text-anchor="end" font-size="12">0.</text>
<text x="201.5" y="899.8" text-anchor="end" font-size="12">10.</text>
<text x="201.5" y="918.1" text-anchor="end" font-size="12">20.</text>
<text x="201.5" y="936.5" text-anchor="end" font-size="12">30.</text>
<text x="201.5" y="954.9" text-anchor="end" font-size="12">40.</text>
<line x1="215.50" y1="950.5" x2="215.50" y2="959.0" stroke="#1a1a1a" stroke-width="1"/>
<line x1="234.50" y1="950.5" x2="234.50" y2="955.0" stroke="#1a1a1a" stroke-width="1"/>
<line x1="253.50" y1="950.5" x2="253.50" y2="959.0" stroke="#1a1a1a" stroke-width="1"/>
<line x1="272.50" y1="950.5" x2="272.50" y2="955.0" stroke="#1a1a1a" stroke-width="1"/>
<line x1="291.50" y1="950.5" x2="291.50" y2="959.0" stroke="#1a1a1a" stroke-width="1"/>
<line x1="309.50" y1="950.5" x2="309.50" y2="955.0" stroke="#1a1a1a" stroke-width="1"/>
<line x1="328.50" y1="950.5" x2="328.50" y2="959.0" stroke="#1a1a1a" stroke-width="1"/>
<line x1="347.50" y1="950.5" x2="347.50" y2="955.0" stroke="#1a1a1a" stroke-width="1"/>
<line x1="366.50" y1="950.5" x2="366.50" y2="959.0" stroke="#1a1a1a" stroke-width="1"/>
<text x="216.0" y="974.3" text-anchor="middle" font-size="12">40.</text>
<text x="253.8" y="974.3" text-anchor="middle" font-size="12">20.</text>
<text x="291.5" y="974.3" text-anchor="middle" font-size="12">0.</text>
<text x="329.2" y="974.3" text-anchor="middle" font-size="12">-20.</text>
<text x="367.0" y="974.3" text-anchor="middle" font-size="12">-40.</text>
<text x="291.0" y="992" text-anchor="middle" font-size="12">KSM-X</text>
<text transform="translate(166,876.5) rotate(-90)" text-anchor="middle" font-size="12">KSM-Y</text>
<path d="M248.8,803.4 C247.6,805.5 244.1,811.6 241.8,816.0 C239.6,820.4 237.3,825.4 235.3,830.1 C233.3,834.8 231.4,839.7 229.9,844.2 C228.4,848.7 227.0,853.2 226.2,857.2 C225.4,861.1 225.2,864.0 225.2,868.0 C225.1,872.0 225.4,876.3 226.0,881.0 C226.6,885.7 227.6,890.8 228.8,896.2 C230.1,901.6 231.8,907.7 233.6,913.5 C235.4,919.3 237.6,925.6 239.7,930.8 C241.8,936.1 244.5,941.8 246.2,944.9 C247.8,948.1 248.9,948.9 249.4,949.7" fill="none" stroke="#2222ff" stroke-width="1.1" stroke-dasharray="2.5,1.5"/>
<path d="M283.6,803.4 C282.1,804.8 277.5,808.5 274.3,811.7 C271.2,814.8 267.7,818.9 264.6,822.5 C261.5,826.1 258.4,829.7 255.9,833.3 C253.4,836.9 251.2,840.6 249.4,844.2 C247.6,847.8 246.2,851.0 245.1,855.0 C243.9,859.0 243.0,864.4 242.5,868.0 C241.9,871.6 241.8,873.4 241.8,876.7 C241.9,879.9 242.3,883.5 242.9,887.5 C243.6,891.5 244.5,896.2 245.7,900.5 C247.0,904.8 248.4,909.2 250.5,913.5 C252.6,917.8 255.2,922.3 258.1,926.5 C261.0,930.7 264.6,935.2 267.8,938.4 C271.1,941.7 275.1,944.2 277.6,946.0 C280.1,947.8 282.1,948.7 283.0,949.2" fill="none" stroke="#8b4a1a" stroke-width="1.1" stroke-dasharray="2.5,1.5"/>
<ellipse cx="291.7" cy="877.3" rx="36.7" ry="37.4" fill="none" stroke="#000" stroke-width="1.1"/>
<ellipse cx="291.7" cy="876.8" rx="2" ry="1.4" fill="none" stroke="#000" stroke-width="0.9"/>
<polyline points="329.1,873.4 329.1,882.1" fill="none" stroke="#000" stroke-width="1.8" />
<polyline points="287.3,915.0 296.0,915.0" fill="none" stroke="#000" stroke-width="1.6" />
<rect x="325.9" y="884.0" width="4.4" height="4.4" fill="#ff0000"/>
<path d="M248.3,926.9 C248.4,927.9 248.3,931.0 249.0,933.0 C249.6,935.0 250.7,937.5 252.2,939.1 C253.8,940.6 255.8,941.8 258.1,942.3 C260.3,942.9 263.0,943.1 265.7,942.3 C268.4,941.5 271.2,939.7 274.3,937.3 C277.5,935.0 283.0,929.8 284.7,928.2" fill="none" stroke="#000" stroke-width="1.1"/>
<path d="M252.7,938.6 C253.6,939.2 256.1,941.6 258.1,942.3 C260.1,943.0 263.5,942.7 264.6,942.8" fill="none" stroke="#000" stroke-width="2.2"/>
<rect x="255.2" y="940.8" width="9" height="4" fill="#0000e0"/>
<path d="M252.7,937.8 L261.7,946.8 M252.7,946.8 L261.7,937.8" stroke="#ff0000" stroke-width="1.3" fill="none"/>
<rect x="509.5" y="802.5" width="151.0" height="148.0" fill="#fff" stroke="#1a1a1a" stroke-width="1"/>
<line x1="501.0" y1="803.50" x2="509.5" y2="803.50" stroke="#1a1a1a" stroke-width="1"/>
<line x1="505.0" y1="804.50" x2="509.5" y2="804.50" stroke="#1a1a1a" stroke-width="1"/>
<line x1="505.0" y1="806.50" x2="509.5" y2="806.50" stroke="#1a1a1a" stroke-width="1"/>
<line x1="505.0" y1="808.50" x2="509.5" y2="808.50" stroke="#1a1a1a" stroke-width="1"/>
<line x1="505.0" y1="810.50" x2="509.5" y2="810.50" stroke="#1a1a1a" stroke-width="1"/>
<line x1="505.0" y1="812.50" x2="509.5" y2="812.50" stroke="#1a1a1a" stroke-width="1"/>
<line x1="505.0" y1="814.50" x2="509.5" y2="814.50" stroke="#1a1a1a" stroke-width="1"/>
<line x1="505.0" y1="815.50" x2="509.5" y2="815.50" stroke="#1a1a1a" stroke-width="1"/>
<line x1="505.0" y1="817.50" x2="509.5" y2="817.50" stroke="#1a1a1a" stroke-width="1"/>
<line x1="505.0" y1="819.50" x2="509.5" y2="819.50" stroke="#1a1a1a" stroke-width="1"/>
<line x1="501.0" y1="821.50" x2="509.5" y2="821.50" stroke="#1a1a1a" stroke-width="1"/>
<line x1="505.0" y1="823.50" x2="509.5" y2="823.50" stroke="#1a1a1a" stroke-width="1"/>
<line x1="505.0" y1="825.50" x2="509.5" y2="825.50" stroke="#1a1a1a" stroke-width="1"/>
<line x1="505.0" y1="826.50" x2="509.5" y2="826.50" stroke="#1a1a1a" stroke-width="1"/>
<line x1="505.0" y1="828.50" x2="509.5" y2="828.50" stroke="#1a1a1a" stroke-width="1"/>
<line x1="505.0" y1="830.50" x2="509.5" y2="830.50" stroke="#1a1a1a" stroke-width="1"/>
<line x1="505.0" y1="832.50" x2="509.5" y2="832.50" stroke="#1a1a1a" stroke-width="1"/>
<line x1="505.0" y1="834.50" x2="509.5" y2="834.50" stroke="#1a1a1a" stroke-width="1"/>
<line x1="505.0" y1="836.50" x2="509.5" y2="836.50" stroke="#1a1a1a" stroke-width="1"/>
<line x1="505.0" y1="837.50" x2="509.5" y2="837.50" stroke="#1a1a1a" stroke-width="1"/>
<line x1="501.0" y1="839.50" x2="509.5" y2="839.50" stroke="#1a1a1a" stroke-width="1"/>
<line x1="505.0" y1="841.50" x2="509.5" y2="841.50" stroke="#1a1a1a" stroke-width="1"/>
<line x1="505.0" y1="843.50" x2="509.5" y2="843.50" stroke="#1a1a1a" stroke-width="1"/>
<line x1="505.0" y1="845.50" x2="509.5" y2="845.50" stroke="#1a1a1a" stroke-width="1"/>
<line x1="505.0" y1="847.50" x2="509.5" y2="847.50" stroke="#1a1a1a" stroke-width="1"/>
<line x1="505.0" y1="848.50" x2="509.5" y2="848.50" stroke="#1a1a1a" stroke-width="1"/>
<line x1="505.0" y1="850.50" x2="509.5" y2="850.50" stroke="#1a1a1a" stroke-width="1"/>
<line x1="505.0" y1="852.50" x2="509.5" y2="852.50" stroke="#1a1a1a" stroke-width="1"/>
<line x1="505.0" y1="854.50" x2="509.5" y2="854.50" stroke="#1a1a1a" stroke-width="1"/>
<line x1="505.0" y1="856.50" x2="509.5" y2="856.50" stroke="#1a1a1a" stroke-width="1"/>
<line x1="501.0" y1="858.50" x2="509.5" y2="858.50" stroke="#1a1a1a" stroke-width="1"/>
<line x1="505.0" y1="859.50" x2="509.5" y2="859.50" stroke="#1a1a1a" stroke-width="1"/>
<line x1="505.0" y1="861.50" x2="509.5" y2="861.50" stroke="#1a1a1a" stroke-width="1"/>
<line x1="505.0" y1="863.50" x2="509.5" y2="863.50" stroke="#1a1a1a" stroke-width="1"/>
<line x1="505.0" y1="865.50" x2="509.5" y2="865.50" stroke="#1a1a1a" stroke-width="1"/>
<line x1="505.0" y1="867.50" x2="509.5" y2="867.50" stroke="#1a1a1a" stroke-width="1"/>
<line x1="505.0" y1="869.50" x2="509.5" y2="869.50" stroke="#1a1a1a" stroke-width="1"/>
<line x1="505.0" y1="870.50" x2="509.5" y2="870.50" stroke="#1a1a1a" stroke-width="1"/>
<line x1="505.0" y1="872.50" x2="509.5" y2="872.50" stroke="#1a1a1a" stroke-width="1"/>
<line x1="505.0" y1="874.50" x2="509.5" y2="874.50" stroke="#1a1a1a" stroke-width="1"/>
<line x1="501.0" y1="876.50" x2="509.5" y2="876.50" stroke="#1a1a1a" stroke-width="1"/>
<line x1="505.0" y1="878.50" x2="509.5" y2="878.50" stroke="#1a1a1a" stroke-width="1"/>
<line x1="505.0" y1="880.50" x2="509.5" y2="880.50" stroke="#1a1a1a" stroke-width="1"/>
<line x1="505.0" y1="882.50" x2="509.5" y2="882.50" stroke="#1a1a1a" stroke-width="1"/>
<line x1="505.0" y1="883.50" x2="509.5" y2="883.50" stroke="#1a1a1a" stroke-width="1"/>
<line x1="505.0" y1="885.50" x2="509.5" y2="885.50" stroke="#1a1a1a" stroke-width="1"/>
<line x1="505.0" y1="887.50" x2="509.5" y2="887.50" stroke="#1a1a1a" stroke-width="1"/>
<line x1="505.0" y1="889.50" x2="509.5" y2="889.50" stroke="#1a1a1a" stroke-width="1"/>
<line x1="505.0" y1="891.50" x2="509.5" y2="891.50" stroke="#1a1a1a" stroke-width="1"/>
<line x1="505.0" y1="893.50" x2="509.5" y2="893.50" stroke="#1a1a1a" stroke-width="1"/>
<line x1="501.0" y1="894.50" x2="509.5" y2="894.50" stroke="#1a1a1a" stroke-width="1"/>
<line x1="505.0" y1="896.50" x2="509.5" y2="896.50" stroke="#1a1a1a" stroke-width="1"/>
<line x1="505.0" y1="898.50" x2="509.5" y2="898.50" stroke="#1a1a1a" stroke-width="1"/>
<line x1="505.0" y1="900.50" x2="509.5" y2="900.50" stroke="#1a1a1a" stroke-width="1"/>
<line x1="505.0" y1="902.50" x2="509.5" y2="902.50" stroke="#1a1a1a" stroke-width="1"/>
<line x1="505.0" y1="904.50" x2="509.5" y2="904.50" stroke="#1a1a1a" stroke-width="1"/>
<line x1="505.0" y1="905.50" x2="509.5" y2="905.50" stroke="#1a1a1a" stroke-width="1"/>
<line x1="505.0" y1="907.50" x2="509.5" y2="907.50" stroke="#1a1a1a" stroke-width="1"/>
<line x1="505.0" y1="909.50" x2="509.5" y2="909.50" stroke="#1a1a1a" stroke-width="1"/>
<line x1="505.0" y1="911.50" x2="509.5" y2="911.50" stroke="#1a1a1a" stroke-width="1"/>
<line x1="501.0" y1="913.50" x2="509.5" y2="913.50" stroke="#1a1a1a" stroke-width="1"/>
<line x1="505.0" y1="915.50" x2="509.5" y2="915.50" stroke="#1a1a1a" stroke-width="1"/>
<line x1="505.0" y1="916.50" x2="509.5" y2="916.50" stroke="#1a1a1a" stroke-width="1"/>
<line x1="505.0" y1="918.50" x2="509.5" y2="918.50" stroke="#1a1a1a" stroke-width="1"/>
<line x1="505.0" y1="920.50" x2="509.5" y2="920.50" stroke="#1a1a1a" stroke-width="1"/>
<line x1="505.0" y1="922.50" x2="509.5" y2="922.50" stroke="#1a1a1a" stroke-width="1"/>
<line x1="505.0" y1="924.50" x2="509.5" y2="924.50" stroke="#1a1a1a" stroke-width="1"/>
<line x1="505.0" y1="926.50" x2="509.5" y2="926.50" stroke="#1a1a1a" stroke-width="1"/>
<line x1="505.0" y1="927.50" x2="509.5" y2="927.50" stroke="#1a1a1a" stroke-width="1"/>
<line x1="505.0" y1="929.50" x2="509.5" y2="929.50" stroke="#1a1a1a" stroke-width="1"/>
<line x1="501.0" y1="931.50" x2="509.5" y2="931.50" stroke="#1a1a1a" stroke-width="1"/>
<line x1="505.0" y1="933.50" x2="509.5" y2="933.50" stroke="#1a1a1a" stroke-width="1"/>
<line x1="505.0" y1="935.50" x2="509.5" y2="935.50" stroke="#1a1a1a" stroke-width="1"/>
<line x1="505.0" y1="937.50" x2="509.5" y2="937.50" stroke="#1a1a1a" stroke-width="1"/>
<line x1="505.0" y1="938.50" x2="509.5" y2="938.50" stroke="#1a1a1a" stroke-width="1"/>
<line x1="505.0" y1="940.50" x2="509.5" y2="940.50" stroke="#1a1a1a" stroke-width="1"/>
<line x1="505.0" y1="942.50" x2="509.5" y2="942.50" stroke="#1a1a1a" stroke-width="1"/>
<line x1="505.0" y1="944.50" x2="509.5" y2="944.50" stroke="#1a1a1a" stroke-width="1"/>
<line x1="505.0" y1="946.50" x2="509.5" y2="946.50" stroke="#1a1a1a" stroke-width="1"/>
<line x1="505.0" y1="948.50" x2="509.5" y2="948.50" stroke="#1a1a1a" stroke-width="1"/>
<line x1="501.0" y1="950.50" x2="509.5" y2="950.50" stroke="#1a1a1a" stroke-width="1"/>
<text x="495.5" y="807.9" text-anchor="end" font-size="12">40.</text>
<text x="495.5" y="826.3" text-anchor="end" font-size="12">30.</text>
<text x="495.5" y="844.6" text-anchor="end" font-size="12">20.</text>
<text x="495.5" y="863.0" text-anchor="end" font-size="12">10.</text>
<text x="495.5" y="881.4" text-anchor="end" font-size="12">0.</text>
<text x="495.5" y="899.8" text-anchor="end" font-size="12">-10.</text>
<text x="495.5" y="918.1" text-anchor="end" font-size="12">-20.</text>
<text x="495.5" y="936.5" text-anchor="end" font-size="12">-30.</text>
<text x="495.5" y="954.9" text-anchor="end" font-size="12">-40.</text>
<line x1="509.50" y1="950.5" x2="509.50" y2="959.0" stroke="#1a1a1a" stroke-width="1"/>
<line x1="528.50" y1="950.5" x2="528.50" y2="955.0" stroke="#1a1a1a" stroke-width="1"/>
<line x1="547.50" y1="950.5" x2="547.50" y2="959.0" stroke="#1a1a1a" stroke-width="1"/>
<line x1="566.50" y1="950.5" x2="566.50" y2="955.0" stroke="#1a1a1a" stroke-width="1"/>
<line x1="585.50" y1="950.5" x2="585.50" y2="959.0" stroke="#1a1a1a" stroke-width="1"/>
<line x1="603.50" y1="950.5" x2="603.50" y2="955.0" stroke="#1a1a1a" stroke-width="1"/>
<line x1="622.50" y1="950.5" x2="622.50" y2="959.0" stroke="#1a1a1a" stroke-width="1"/>
<line x1="641.50" y1="950.5" x2="641.50" y2="955.0" stroke="#1a1a1a" stroke-width="1"/>
<line x1="660.50" y1="950.5" x2="660.50" y2="959.0" stroke="#1a1a1a" stroke-width="1"/>
<text x="510.0" y="974.3" text-anchor="middle" font-size="12">40.</text>
<text x="547.8" y="974.3" text-anchor="middle" font-size="12">20.</text>
<text x="585.5" y="974.3" text-anchor="middle" font-size="12">0.</text>
<text x="623.2" y="974.3" text-anchor="middle" font-size="12">-20.</text>
<text x="661.0" y="974.3" text-anchor="middle" font-size="12">-40.</text>
<text x="585.0" y="992" text-anchor="middle" font-size="12">KSM-X</text>
<text transform="translate(460,876.5) rotate(-90)" text-anchor="middle" font-size="12">KSM-Z</text>
<path d="M543.5,803.4 C542.3,805.5 538.5,811.6 536.2,816.0 C533.9,820.4 531.7,825.4 529.7,830.1 C527.7,834.8 525.8,839.3 524.2,844.2 C522.7,849.0 521.4,853.9 520.6,859.3 C519.7,864.8 519.4,872.0 519.3,876.7 C519.2,881.4 519.4,883.2 519.9,887.5 C520.4,891.8 521.0,897.6 522.1,902.7 C523.2,907.7 524.8,913.1 526.4,917.8 C528.0,922.5 529.8,926.7 531.8,930.8 C533.8,935.0 536.5,939.6 538.3,942.8 C540.2,945.9 542.1,948.5 542.9,949.7" fill="none" stroke="#2222ff" stroke-width="1.1" stroke-dasharray="2.5,1.5"/>
<path d="M577.8,804.1 C576.2,805.2 571.6,808.1 568.7,810.6 C565.7,813.1 562.9,816.0 560.0,819.2 C557.1,822.5 554.0,826.3 551.3,830.1 C548.6,833.9 545.8,837.8 543.8,842.0 C541.7,846.2 540.2,850.7 539.0,855.0 C537.8,859.3 537.1,864.0 536.6,868.0 C536.1,872.0 536.1,874.9 536.2,878.8 C536.3,882.8 536.5,887.5 537.2,891.8 C538.0,896.2 539.1,900.7 540.5,904.8 C541.9,909.0 543.6,912.8 545.9,916.8 C548.3,920.7 551.5,924.9 554.6,928.7 C557.7,932.5 561.3,936.5 564.3,939.5 C567.4,942.5 570.7,944.7 573.0,946.4 C575.3,948.2 577.2,949.3 578.0,949.9" fill="none" stroke="#8b4a1a" stroke-width="1.1" stroke-dasharray="2.5,1.5"/>
<polyline points="542.2,887.5 621.8,867.6" fill="none" stroke="#000" stroke-width="1.2" />
<polyline points="557.8,883.6 616.3,868.9" fill="none" stroke="#000" stroke-width="1.7" />
<ellipse cx="585.1" cy="876.9" rx="2" ry="1.4" fill="#fff" stroke="#000" stroke-width="0.9"/>
<rect x="619.8" y="865.6" width="4.8" height="4" rx="1" fill="#ff0000"/>
<rect x="549.6" y="882.0" width="9" height="4" rx="1" fill="#0000e0"/>
<path d="M546.8,879.8 L555.8,888.8 M546.8,888.8 L555.8,879.8" stroke="#ff0000" stroke-width="1.3" fill="none"/>
<rect x="803.5" y="802.5" width="151.0" height="148.0" fill="#fff" stroke="#1a1a1a" stroke-width="1"/>
<line x1="795.0" y1="803.50" x2="803.5" y2="803.50" stroke="#1a1a1a" stroke-width="1"/>
<line x1="799.0" y1="804.50" x2="803.5" y2="804.50" stroke="#1a1a1a" stroke-width="1"/>
<line x1="799.0" y1="806.50" x2="803.5" y2="806.50" stroke="#1a1a1a" stroke-width="1"/>
<line x1="799.0" y1="808.50" x2="803.5" y2="808.50" stroke="#1a1a1a" stroke-width="1"/>
<line x1="799.0" y1="810.50" x2="803.5" y2="810.50" stroke="#1a1a1a" stroke-width="1"/>
<line x1="799.0" y1="812.50" x2="803.5" y2="812.50" stroke="#1a1a1a" stroke-width="1"/>
<line x1="799.0" y1="814.50" x2="803.5" y2="814.50" stroke="#1a1a1a" stroke-width="1"/>
<line x1="799.0" y1="815.50" x2="803.5" y2="815.50" stroke="#1a1a1a" stroke-width="1"/>
<line x1="799.0" y1="817.50" x2="803.5" y2="817.50" stroke="#1a1a1a" stroke-width="1"/>
<line x1="799.0" y1="819.50" x2="803.5" y2="819.50" stroke="#1a1a1a" stroke-width="1"/>
<line x1="795.0" y1="821.50" x2="803.5" y2="821.50" stroke="#1a1a1a" stroke-width="1"/>
<line x1="799.0" y1="823.50" x2="803.5" y2="823.50" stroke="#1a1a1a" stroke-width="1"/>
<line x1="799.0" y1="825.50" x2="803.5" y2="825.50" stroke="#1a1a1a" stroke-width="1"/>
<line x1="799.0" y1="826.50" x2="803.5" y2="826.50" stroke="#1a1a1a" stroke-width="1"/>
<line x1="799.0" y1="828.50" x2="803.5" y2="828.50" stroke="#1a1a1a" stroke-width="1"/>
<line x1="799.0" y1="830.50" x2="803.5" y2="830.50" stroke="#1a1a1a" stroke-width="1"/>
<line x1="799.0" y1="832.50" x2="803.5" y2="832.50" stroke="#1a1a1a" stroke-width="1"/>
<line x1="799.0" y1="834.50" x2="803.5" y2="834.50" stroke="#1a1a1a" stroke-width="1"/>
<line x1="799.0" y1="836.50" x2="803.5" y2="836.50" stroke="#1a1a1a" stroke-width="1"/>
<line x1="799.0" y1="837.50" x2="803.5" y2="837.50" stroke="#1a1a1a" stroke-width="1"/>
<line x1="795.0" y1="839.50" x2="803.5" y2="839.50" stroke="#1a1a1a" stroke-width="1"/>
<line x1="799.0" y1="841.50" x2="803.5" y2="841.50" stroke="#1a1a1a" stroke-width="1"/>
<line x1="799.0" y1="843.50" x2="803.5" y2="843.50" stroke="#1a1a1a" stroke-width="1"/>
<line x1="799.0" y1="845.50" x2="803.5" y2="845.50" stroke="#1a1a1a" stroke-width="1"/>
<line x1="799.0" y1="847.50" x2="803.5" y2="847.50" stroke="#1a1a1a" stroke-width="1"/>
<line x1="799.0" y1="848.50" x2="803.5" y2="848.50" stroke="#1a1a1a" stroke-width="1"/>
<line x1="799.0" y1="850.50" x2="803.5" y2="850.50" stroke="#1a1a1a" stroke-width="1"/>
<line x1="799.0" y1="852.50" x2="803.5" y2="852.50" stroke="#1a1a1a" stroke-width="1"/>
<line x1="799.0" y1="854.50" x2="803.5" y2="854.50" stroke="#1a1a1a" stroke-width="1"/>
<line x1="799.0" y1="856.50" x2="803.5" y2="856.50" stroke="#1a1a1a" stroke-width="1"/>
<line x1="795.0" y1="858.50" x2="803.5" y2="858.50" stroke="#1a1a1a" stroke-width="1"/>
<line x1="799.0" y1="859.50" x2="803.5" y2="859.50" stroke="#1a1a1a" stroke-width="1"/>
<line x1="799.0" y1="861.50" x2="803.5" y2="861.50" stroke="#1a1a1a" stroke-width="1"/>
<line x1="799.0" y1="863.50" x2="803.5" y2="863.50" stroke="#1a1a1a" stroke-width="1"/>
<line x1="799.0" y1="865.50" x2="803.5" y2="865.50" stroke="#1a1a1a" stroke-width="1"/>
<line x1="799.0" y1="867.50" x2="803.5" y2="867.50" stroke="#1a1a1a" stroke-width="1"/>
<line x1="799.0" y1="869.50" x2="803.5" y2="869.50" stroke="#1a1a1a" stroke-width="1"/>
<line x1="799.0" y1="870.50" x2="803.5" y2="870.50" stroke="#1a1a1a" stroke-width="1"/>
<line x1="799.0" y1="872.50" x2="803.5" y2="872.50" stroke="#1a1a1a" stroke-width="1"/>
<line x1="799.0" y1="874.50" x2="803.5" y2="874.50" stroke="#1a1a1a" stroke-width="1"/>
<line x1="795.0" y1="876.50" x2="803.5" y2="876.50" stroke="#1a1a1a" stroke-width="1"/>
<line x1="799.0" y1="878.50" x2="803.5" y2="878.50" stroke="#1a1a1a" stroke-width="1"/>
<line x1="799.0" y1="880.50" x2="803.5" y2="880.50" stroke="#1a1a1a" stroke-width="1"/>
<line x1="799.0" y1="882.50" x2="803.5" y2="882.50" stroke="#1a1a1a" stroke-width="1"/>
<line x1="799.0" y1="883.50" x2="803.5" y2="883.50" stroke="#1a1a1a" stroke-width="1"/>
<line x1="799.0" y1="885.50" x2="803.5" y2="885.50" stroke="#1a1a1a" stroke-width="1"/>
<line x1="799.0" y1="887.50" x2="803.5" y2="887.50" stroke="#1a1a1a" stroke-width="1"/>
<line x1="799.0" y1="889.50" x2="803.5" y2="889.50" stroke="#1a1a1a" stroke-width="1"/>
<line x1="799.0" y1="891.50" x2="803.5" y2="891.50" stroke="#1a1a1a" stroke-width="1"/>
<line x1="799.0" y1="893.50" x2="803.5" y2="893.50" stroke="#1a1a1a" stroke-width="1"/>
<line x1="795.0" y1="894.50" x2="803.5" y2="894.50" stroke="#1a1a1a" stroke-width="1"/>
<line x1="799.0" y1="896.50" x2="803.5" y2="896.50" stroke="#1a1a1a" stroke-width="1"/>
<line x1="799.0" y1="898.50" x2="803.5" y2="898.50" stroke="#1a1a1a" stroke-width="1"/>
<line x1="799.0" y1="900.50" x2="803.5" y2="900.50" stroke="#1a1a1a" stroke-width="1"/>
<line x1="799.0" y1="902.50" x2="803.5" y2="902.50" stroke="#1a1a1a" stroke-width="1"/>
<line x1="799.0" y1="904.50" x2="803.5" y2="904.50" stroke="#1a1a1a" stroke-width="1"/>
<line x1="799.0" y1="905.50" x2="803.5" y2="905.50" stroke="#1a1a1a" stroke-width="1"/>
<line x1="799.0" y1="907.50" x2="803.5" y2="907.50" stroke="#1a1a1a" stroke-width="1"/>
<line x1="799.0" y1="909.50" x2="803.5" y2="909.50" stroke="#1a1a1a" stroke-width="1"/>
<line x1="799.0" y1="911.50" x2="803.5" y2="911.50" stroke="#1a1a1a" stroke-width="1"/>
<line x1="795.0" y1="913.50" x2="803.5" y2="913.50" stroke="#1a1a1a" stroke-width="1"/>
<line x1="799.0" y1="915.50" x2="803.5" y2="915.50" stroke="#1a1a1a" stroke-width="1"/>
<line x1="799.0" y1="916.50" x2="803.5" y2="916.50" stroke="#1a1a1a" stroke-width="1"/>
<line x1="799.0" y1="918.50" x2="803.5" y2="918.50" stroke="#1a1a1a" stroke-width="1"/>
<line x1="799.0" y1="920.50" x2="803.5" y2="920.50" stroke="#1a1a1a" stroke-width="1"/>
<line x1="799.0" y1="922.50" x2="803.5" y2="922.50" stroke="#1a1a1a" stroke-width="1"/>
<line x1="799.0" y1="924.50" x2="803.5" y2="924.50" stroke="#1a1a1a" stroke-width="1"/>
<line x1="799.0" y1="926.50" x2="803.5" y2="926.50" stroke="#1a1a1a" stroke-width="1"/>
<line x1="799.0" y1="927.50" x2="803.5" y2="927.50" stroke="#1a1a1a" stroke-width="1"/>
<line x1="799.0" y1="929.50" x2="803.5" y2="929.50" stroke="#1a1a1a" stroke-width="1"/>
<line x1="795.0" y1="931.50" x2="803.5" y2="931.50" stroke="#1a1a1a" stroke-width="1"/>
<line x1="799.0" y1="933.50" x2="803.5" y2="933.50" stroke="#1a1a1a" stroke-width="1"/>
<line x1="799.0" y1="935.50" x2="803.5" y2="935.50" stroke="#1a1a1a" stroke-width="1"/>
<line x1="799.0" y1="937.50" x2="803.5" y2="937.50" stroke="#1a1a1a" stroke-width="1"/>
<line x1="799.0" y1="938.50" x2="803.5" y2="938.50" stroke="#1a1a1a" stroke-width="1"/>
<line x1="799.0" y1="940.50" x2="803.5" y2="940.50" stroke="#1a1a1a" stroke-width="1"/>
<line x1="799.0" y1="942.50" x2="803.5" y2="942.50" stroke="#1a1a1a" stroke-width="1"/>
<line x1="799.0" y1="944.50" x2="803.5" y2="944.50" stroke="#1a1a1a" stroke-width="1"/>
<line x1="799.0" y1="946.50" x2="803.5" y2="946.50" stroke="#1a1a1a" stroke-width="1"/>
<line x1="799.0" y1="948.50" x2="803.5" y2="948.50" stroke="#1a1a1a" stroke-width="1"/>
<line x1="795.0" y1="950.50" x2="803.5" y2="950.50" stroke="#1a1a1a" stroke-width="1"/>
<text x="789.5" y="807.9" text-anchor="end" font-size="12">40.</text>
<text x="789.5" y="826.3" text-anchor="end" font-size="12">30.</text>
<text x="789.5" y="844.6" text-anchor="end" font-size="12">20.</text>
<text x="789.5" y="863.0" text-anchor="end" font-size="12">10.</text>
<text x="789.5" y="881.4" text-anchor="end" font-size="12">0.</text>
<text x="789.5" y="899.8" text-anchor="end" font-size="12">-10.</text>
<text x="789.5" y="918.1" text-anchor="end" font-size="12">-20.</text>
<text x="789.5" y="936.5" text-anchor="end" font-size="12">-30.</text>
<text x="789.5" y="954.9" text-anchor="end" font-size="12">-40.</text>
<line x1="803.50" y1="950.5" x2="803.50" y2="959.0" stroke="#1a1a1a" stroke-width="1"/>
<line x1="822.50" y1="950.5" x2="822.50" y2="955.0" stroke="#1a1a1a" stroke-width="1"/>
<line x1="841.50" y1="950.5" x2="841.50" y2="959.0" stroke="#1a1a1a" stroke-width="1"/>
<line x1="860.50" y1="950.5" x2="860.50" y2="955.0" stroke="#1a1a1a" stroke-width="1"/>
<line x1="879.50" y1="950.5" x2="879.50" y2="959.0" stroke="#1a1a1a" stroke-width="1"/>
<line x1="897.50" y1="950.5" x2="897.50" y2="955.0" stroke="#1a1a1a" stroke-width="1"/>
<line x1="916.50" y1="950.5" x2="916.50" y2="959.0" stroke="#1a1a1a" stroke-width="1"/>
<line x1="935.50" y1="950.5" x2="935.50" y2="955.0" stroke="#1a1a1a" stroke-width="1"/>
<line x1="954.50" y1="950.5" x2="954.50" y2="959.0" stroke="#1a1a1a" stroke-width="1"/>
<text x="804.0" y="974.3" text-anchor="middle" font-size="12">-40.</text>
<text x="841.8" y="974.3" text-anchor="middle" font-size="12">-20.</text>
<text x="879.5" y="974.3" text-anchor="middle" font-size="12">0.</text>
<text x="917.2" y="974.3" text-anchor="middle" font-size="12">20.</text>
<text x="955.0" y="974.3" text-anchor="middle" font-size="12">40.</text>
<text x="879.0" y="992" text-anchor="middle" font-size="12">KSM-Y</text>
<text transform="translate(754,876.5) rotate(-90)" text-anchor="middle" font-size="12">KSM-Z</text>
<clipPath id="c3"><rect x="804" y="803" width="150.5" height="147"/></clipPath>
<ellipse cx="879.1" cy="876.7" rx="88.6" ry="88.2" fill="none" stroke="#2222ff" stroke-width="1.1" stroke-dasharray="2.5,1.5" clip-path="url(#c3)"/>
<ellipse cx="879.1" cy="876.4" rx="49.8" ry="48.4" fill="none" stroke="#8b4a1a" stroke-width="1.1" stroke-dasharray="2.5,1.5"/>
<ellipse cx="880.1" cy="876.5" rx="38.2" ry="9.4" fill="none" stroke="#000" stroke-width="1.3"/>
<ellipse cx="879.1" cy="876.7" rx="2" ry="1.4" fill="none" stroke="#000" stroke-width="0.9"/>
<rect x="886.6" y="865.4" width="4.4" height="4.4" rx="1" fill="#ff0000"/>
<path d="M931.9,878.4 C933.0,878.7 936.5,879.5 938.4,880.1 C940.3,880.7 942.0,881.4 943.4,882.1 C944.8,882.8 946.1,883.9 946.7,884.2" fill="none" stroke="#000" stroke-width="1.2"/>
<path d="M931.5,887.5 C932.4,887.5 935.2,887.4 936.9,887.3 C938.7,887.1 940.3,887.1 941.9,886.6 C943.5,886.2 945.9,885.0 946.7,884.7" fill="none" stroke="#000" stroke-width="1.2"/>
<rect x="943.7" y="882.2" width="6" height="4" rx="1" fill="#0000e0"/>
<path d="M941.5,879.8 L950.5,888.8 M941.5,888.8 L950.5,879.8" stroke="#ff0000" stroke-width="1.3" fill="none"/>
</svg></body></html>
